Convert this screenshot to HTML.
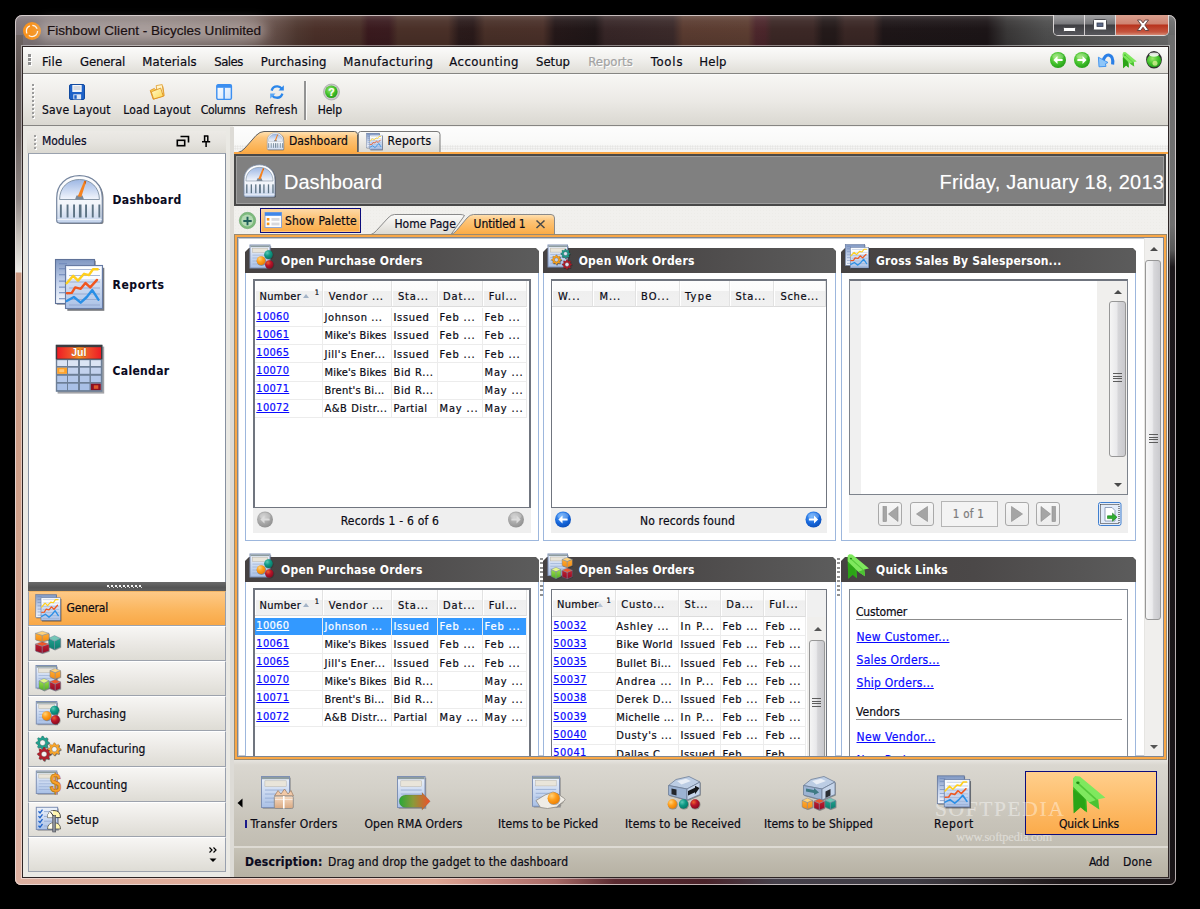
<!DOCTYPE html>
<html><head><meta charset="utf-8"><title>Fishbowl Client - Bicycles Unlimited</title>
<style>
html,body{margin:0;padding:0;background:#000;}
body{width:1200px;height:909px;position:relative;overflow:hidden;font-family:"DejaVu Sans Condensed","Liberation Sans",sans-serif;font-size:13px;color:#000;}
div,span,svg,a{position:absolute;box-sizing:border-box;white-space:pre;}
span{-webkit-text-stroke:.2px currentColor;}
a{color:#0000e0;text-decoration:underline;}
.lk{color:#0000e6;text-decoration:underline;}
</style></head><body>
<div style="left:15px;top:15px;width:1161px;height:870px;border-radius:7px 7px 6px 6px;overflow:hidden;background:#3a2e2e;"><div style="left:0;top:0;width:1161px;height:33px;background:linear-gradient(to right,#80767a 0,#83797a 40px,#867b79 130px,#7c6c68 225px,#6a544e 255px,#503931 282px,#4b3029 300px,#492f28 345px,#3a1a1e 353px,#3a1b1f 374px,#4a3028 383px,#4a3028 433px,#2b1b1b 444px,#2a1a1a 458px,#493028 470px,#4a3029 528px,#251819 540px,#1f1617 580px,#372627 590px,#3b2a2a 658px,#5b3c31 668px,#5d3e32 733px,#4d272c 741px,#4b262b 750px,#3c2826 757px,#3c2826 798px,#241a1a 808px,#241a1a 820px,#3a2725 830px,#3a2725 858px,#1e1618 868px,#1c1517 972px,#3a3838 992px,#4e4e4e 1030px,#5a5a5a 1075px,#6e6e6e 1161px);"></div><div style="left:0;top:0;width:1161px;height:33px;background:linear-gradient(to bottom,rgba(255,255,255,.18) 0,rgba(255,255,255,.05) 6px,rgba(0,0,0,0) 14px,rgba(0,0,0,.12) 33px);"></div><div style="left:0;top:20px;width:8px;height:850px;background:linear-gradient(to bottom,#6e6462 0,#5c5250 40px,#685e5c 100px,#8e8684 165px,#c4beb8 200px,#ecebe6 237px,#c8957e 238px,#d0a08a 500px,#ddb0a0 850px);"></div><div style="left:1153px;top:20px;width:8px;height:850px;background:linear-gradient(to bottom,#6e6e6e 0,#707070 190px,#585858 215px,#1c181b 232px,#181416 850px);"></div><div style="left:0;top:862px;width:1161px;height:8px;background:linear-gradient(to right,#dcb0a0 0,#e0ab98 200px,#dda592 420px,#c98a80 470px,#a86a66 540px,#5a2a30 600px,#4a2229 690px,#45404a 760px,#3f3c44 900px,#2a2426 1000px,#1c1618 1050px,#1a1416 1161px);"></div></div>
<div style="left:15px;top:15px;width:1161px;height:870px;border-radius:7px 7px 6px 6px;border:1px solid rgba(235,225,225,.75);"></div>
<div style="left:22px;top:46px;width:1147px;height:832px;border:1px solid #2d2424;background:#f0efec;"></div>
<div style="left:21px;top:45px;width:1149px;height:834px;border:1px solid rgba(255,255,255,.45);"></div>
<svg style="left:22px;top:21px;" width="20" height="20" viewBox="0 0 20 20"><circle cx="10" cy="10" r="9" fill="#f7931e"/><circle cx="10" cy="10" r="5.6" fill="none" stroke="#fff" stroke-width="1.3" stroke-dasharray="12 2.5 9 2.5 6 2.5" opacity=".9"/></svg>
<div style="left:38px;top:21px;width:228px;height:20px;border-radius:11px;background:rgba(222,212,210,.42);filter:blur(6px);"></div>
<span style="left:47px;top:23.6px;font-size:13.5px;line-height:13.5px;color:#1a1012;letter-spacing:0.03px;font-family:'Liberation Sans',sans-serif;">Fishbowl Client - Bicycles Unlimited</span>
<div style="left:1053px;top:15px;width:116px;height:21px;border-radius:0 0 5px 5px;border:1px solid rgba(240,235,235,.85);border-top:none;overflow:hidden;"><div style="left:0;top:0;width:31px;height:20px;background:linear-gradient(to bottom,#a2a2a4 0,#78787b 45%,#3e3e42 50%,#57575c 100%);border-right:1px solid rgba(240,235,235,.8);"></div><div style="left:31px;top:0;width:31px;height:20px;background:linear-gradient(to bottom,#a2a2a4 0,#78787b 45%,#3e3e42 50%,#57575c 100%);border-right:1px solid rgba(240,235,235,.8);"></div><div style="left:62px;top:0;width:53px;height:20px;background:linear-gradient(to bottom,#d9a08f 0,#cf8270 45%,#b8321c 50%,#c5553f 85%,#d78a74 100%);"></div></div>
<svg style="left:1063px;top:27px;" width="13" height="5" viewBox="0 0 13 5"><rect x=".5" y=".5" width="12" height="4" rx="1" fill="#fff" stroke="#4a4a4e"/></svg>
<svg style="left:1093px;top:19px;" width="15" height="12" viewBox="0 0 15 12"><rect x=".5" y=".5" width="13" height="10.5" rx="1" fill="#fff" stroke="#4a4a4e"/><rect x="4" y="4" width="6" height="3.5" fill="#5a6a8a" stroke="#3a3f4f" stroke-width=".8"/></svg>
<svg style="left:1136px;top:19px;" width="14" height="13" viewBox="0 0 14 13"><path d="M1.5 1h3.3l2.2 2.9L9.2 1h3.3L8.8 6l3.9 5.5H9.3L7 8.3 4.7 11.5H1.3L5.2 6z" fill="#fff" stroke="#5a3a38" stroke-width=".9"/></svg>
<div style="left:23px;top:47px;width:1145px;height:27px;background:linear-gradient(to bottom,#fbfbfa 0,#f1f0ed 45%,#e0ded8 100%);border-bottom:1px solid #868582;"></div>
<div style="left:28px;top:54px;width:3px;height:3px;background:#8f8f8f;box-shadow:1px 1px 0 #fff;"></div>
<div style="left:28px;top:58px;width:3px;height:3px;background:#8f8f8f;box-shadow:1px 1px 0 #fff;"></div>
<div style="left:28px;top:62px;width:3px;height:3px;background:#8f8f8f;box-shadow:1px 1px 0 #fff;"></div>
<span style="left:42px;top:54.5px;font-size:13px;line-height:13px;color:#0a0a14;letter-spacing:0.20px;">File</span>
<span style="left:80px;top:54.5px;font-size:13px;line-height:13px;color:#0a0a14;letter-spacing:-0.16px;">General</span>
<span style="left:142.3px;top:54.5px;font-size:13px;line-height:13px;color:#0a0a14;letter-spacing:0.09px;">Materials</span>
<span style="left:214.3px;top:54.5px;font-size:13px;line-height:13px;color:#0a0a14;letter-spacing:-0.55px;">Sales</span>
<span style="left:260.7px;top:54.5px;font-size:13px;line-height:13px;color:#0a0a14;letter-spacing:0.20px;">Purchasing</span>
<span style="left:343.3px;top:54.5px;font-size:13px;line-height:13px;color:#0a0a14;letter-spacing:0.41px;">Manufacturing</span>
<span style="left:449.3px;top:54.5px;font-size:13px;line-height:13px;color:#0a0a14;letter-spacing:0.44px;">Accounting</span>
<span style="left:536px;top:54.5px;font-size:13px;line-height:13px;color:#0a0a14;letter-spacing:-0.01px;">Setup</span>
<span style="left:588.3px;top:54.5px;font-size:13px;line-height:13px;color:#a3a3a3;letter-spacing:-0.06px;text-shadow:1px 1px 0 #fff;">Reports</span>
<span style="left:650.7px;top:54.5px;font-size:13px;line-height:13px;color:#0a0a14;letter-spacing:0.80px;">Tools</span>
<span style="left:699.3px;top:54.5px;font-size:13px;line-height:13px;color:#0a0a14;letter-spacing:0.18px;">Help</span>
<div style="left:23px;top:74px;width:1145px;height:52px;background:linear-gradient(to bottom,#f7f6f4 0,#eceae6 50%,#dad8d1 100%);border-bottom:1px solid #868582;border-top:1px solid #fbfbfa;"></div>
<div style="left:23px;top:126px;width:1145px;height:1px;background:#f4f3f0;"></div>
<div style="left:32px;top:84px;width:2px;height:2px;background:#9a9a9a;box-shadow:1px 1px 0 #fff;"></div>
<div style="left:32px;top:88px;width:2px;height:2px;background:#9a9a9a;box-shadow:1px 1px 0 #fff;"></div>
<div style="left:32px;top:92px;width:2px;height:2px;background:#9a9a9a;box-shadow:1px 1px 0 #fff;"></div>
<div style="left:32px;top:96px;width:2px;height:2px;background:#9a9a9a;box-shadow:1px 1px 0 #fff;"></div>
<div style="left:32px;top:100px;width:2px;height:2px;background:#9a9a9a;box-shadow:1px 1px 0 #fff;"></div>
<div style="left:32px;top:104px;width:2px;height:2px;background:#9a9a9a;box-shadow:1px 1px 0 #fff;"></div>
<div style="left:32px;top:108px;width:2px;height:2px;background:#9a9a9a;box-shadow:1px 1px 0 #fff;"></div>
<div style="left:32px;top:112px;width:2px;height:2px;background:#9a9a9a;box-shadow:1px 1px 0 #fff;"></div>
<div style="left:32px;top:116px;width:2px;height:2px;background:#9a9a9a;box-shadow:1px 1px 0 #fff;"></div>
<span style="left:42px;top:103.6px;font-size:12px;line-height:12px;color:#0a0a14;letter-spacing:0.19px;">Save Layout</span>
<span style="left:123.3px;top:103.6px;font-size:12px;line-height:12px;color:#0a0a14;letter-spacing:0.13px;">Load Layout</span>
<span style="left:200.7px;top:103.6px;font-size:12px;line-height:12px;color:#0a0a14;letter-spacing:-0.34px;">Columns</span>
<span style="left:255px;top:103.6px;font-size:12px;line-height:12px;color:#0a0a14;letter-spacing:0.33px;">Refresh</span>
<span style="left:317.7px;top:103.6px;font-size:12px;line-height:12px;color:#0a0a14;letter-spacing:-0.08px;">Help</span>
<div style="left:303.5px;top:81px;width:2px;height:39px;background:#939393;box-shadow:1px 0 0 #fbfbfa;"></div>
<div style="left:23px;top:126px;width:210px;height:751px;background:#eae9e4;"></div>
<div style="left:27px;top:131px;width:199px;height:22px;background:linear-gradient(to bottom,#eceae6 0,#e6e4df 50%,#dbd9d2 100%);"></div>
<div style="left:34px;top:135px;width:2px;height:2px;background:#a0a0a0;box-shadow:1px 1px 0 #fff;"></div>
<div style="left:34px;top:139px;width:2px;height:2px;background:#a0a0a0;box-shadow:1px 1px 0 #fff;"></div>
<div style="left:34px;top:143px;width:2px;height:2px;background:#a0a0a0;box-shadow:1px 1px 0 #fff;"></div>
<div style="left:34px;top:147px;width:2px;height:2px;background:#a0a0a0;box-shadow:1px 1px 0 #fff;"></div>
<span style="left:42px;top:135.1px;font-size:12px;line-height:12px;color:#0a0a28;letter-spacing:-0.06px;">Modules</span>
<svg style="left:176px;top:135px;" width="14" height="12" viewBox="0 0 14 12"><path d="M4.5 1.5h8v6" fill="none" stroke="#000" stroke-width="1.6"/><rect x="1.3" y="5.3" width="7.4" height="5.4" fill="none" stroke="#000" stroke-width="1.6"/></svg>
<svg style="left:201px;top:135px;" width="10" height="13" viewBox="0 0 10 13"><path d="M2.8 1h4.6M3.6 1v5.6M6.8 1v5.6M1 6.8h8.2M5.1 7v5" fill="none" stroke="#000" stroke-width="1.5"/></svg>
<div style="left:28px;top:153px;width:198px;height:430px;background:#fff;border:1px solid #8690a0;border-top-color:#9aa2ae;"></div>
<span style="left:112.5px;top:193.5px;font-size:12px;line-height:12px;font-weight:700;color:#0a0a1e;letter-spacing:0.35px;-webkit-text-stroke:.1px;">Dashboard</span>
<span style="left:112.5px;top:279.1px;font-size:12px;line-height:12px;font-weight:700;color:#0a0a1e;letter-spacing:0.61px;-webkit-text-stroke:.1px;">Reports</span>
<span style="left:112.5px;top:364.7px;font-size:12px;line-height:12px;font-weight:700;color:#0a0a1e;letter-spacing:0.34px;-webkit-text-stroke:.1px;">Calendar</span>
<div style="left:28px;top:582px;width:198px;height:9px;background:linear-gradient(to bottom,#6a6a6a 0,#555 60%,#5e5e5e 100%);"></div>
<div style="left:107px;top:585px;width:2px;height:2px;background:#f2f2f2;"></div>
<div style="left:109px;top:587px;width:1px;height:1px;background:#dcdcdc;"></div>
<div style="left:111px;top:585px;width:2px;height:2px;background:#f2f2f2;"></div>
<div style="left:113px;top:587px;width:1px;height:1px;background:#dcdcdc;"></div>
<div style="left:115px;top:585px;width:2px;height:2px;background:#f2f2f2;"></div>
<div style="left:117px;top:587px;width:1px;height:1px;background:#dcdcdc;"></div>
<div style="left:119px;top:585px;width:2px;height:2px;background:#f2f2f2;"></div>
<div style="left:121px;top:587px;width:1px;height:1px;background:#dcdcdc;"></div>
<div style="left:123px;top:585px;width:2px;height:2px;background:#f2f2f2;"></div>
<div style="left:125px;top:587px;width:1px;height:1px;background:#dcdcdc;"></div>
<div style="left:127px;top:585px;width:2px;height:2px;background:#f2f2f2;"></div>
<div style="left:129px;top:587px;width:1px;height:1px;background:#dcdcdc;"></div>
<div style="left:131px;top:585px;width:2px;height:2px;background:#f2f2f2;"></div>
<div style="left:133px;top:587px;width:1px;height:1px;background:#dcdcdc;"></div>
<div style="left:135px;top:585px;width:2px;height:2px;background:#f2f2f2;"></div>
<div style="left:137px;top:587px;width:1px;height:1px;background:#dcdcdc;"></div>
<div style="left:139px;top:585px;width:2px;height:2px;background:#f2f2f2;"></div>
<div style="left:141px;top:587px;width:1px;height:1px;background:#dcdcdc;"></div>
<div style="left:28px;top:591px;width:198px;height:35px;background:linear-gradient(to bottom,#fdc987 0,#fbb65e 55%,#f9a846 100%);border:1px solid #98a0ae;border-top:1px solid #f3b565;border-bottom:1px solid #9da3ad;"></div>
<span style="left:66.5px;top:601.8px;font-size:12px;line-height:12px;color:#0a0a14;letter-spacing:-0.15px;">General</span>
<div style="left:28px;top:626px;width:198px;height:35px;background:linear-gradient(to bottom,#f7f6f4 0,#eceae6 45%,#dedcd5 100%);border:1px solid #98a0ae;border-top:1px solid #fff;border-bottom:1px solid #9da3ad;"></div>
<span style="left:66.5px;top:637.7px;font-size:12px;line-height:12px;color:#0a0a14;letter-spacing:-0.11px;">Materials</span>
<div style="left:28px;top:661px;width:198px;height:35px;background:linear-gradient(to bottom,#f7f6f4 0,#eceae6 45%,#dedcd5 100%);border:1px solid #98a0ae;border-top:1px solid #fff;border-bottom:1px solid #9da3ad;"></div>
<span style="left:66.5px;top:672.7px;font-size:12px;line-height:12px;color:#0a0a14;letter-spacing:-0.15px;">Sales</span>
<div style="left:28px;top:696px;width:198px;height:35px;background:linear-gradient(to bottom,#f7f6f4 0,#eceae6 45%,#dedcd5 100%);border:1px solid #98a0ae;border-top:1px solid #fff;border-bottom:1px solid #9da3ad;"></div>
<span style="left:66.5px;top:707.7px;font-size:12px;line-height:12px;color:#0a0a14;letter-spacing:0.05px;">Purchasing</span>
<div style="left:28px;top:731px;width:198px;height:36px;background:linear-gradient(to bottom,#f7f6f4 0,#eceae6 45%,#dedcd5 100%);border:1px solid #98a0ae;border-top:1px solid #fff;border-bottom:1px solid #9da3ad;"></div>
<span style="left:66.5px;top:742.7px;font-size:12px;line-height:12px;color:#0a0a14;letter-spacing:0.06px;">Manufacturing</span>
<div style="left:28px;top:767px;width:198px;height:35px;background:linear-gradient(to bottom,#f7f6f4 0,#eceae6 45%,#dedcd5 100%);border:1px solid #98a0ae;border-top:1px solid #fff;border-bottom:1px solid #9da3ad;"></div>
<span style="left:66.5px;top:778.7px;font-size:12px;line-height:12px;color:#0a0a14;letter-spacing:0.07px;">Accounting</span>
<div style="left:28px;top:802px;width:198px;height:35px;background:linear-gradient(to bottom,#f7f6f4 0,#eceae6 45%,#dedcd5 100%);border:1px solid #98a0ae;border-top:1px solid #fff;border-bottom:1px solid #9da3ad;"></div>
<span style="left:66.5px;top:813.7px;font-size:12px;line-height:12px;color:#0a0a14;letter-spacing:0.21px;">Setup</span>
<div style="left:28px;top:837px;width:198px;height:35px;background:linear-gradient(to bottom,#f7f6f4 0,#eceae6 45%,#dedcd5 100%);border:1px solid #98a0ae;border-top:1px solid #fff;border-bottom:1px solid #9da3ad;"></div>
<svg style="left:208px;top:846px;" width="10" height="18" viewBox="0 0 10 18"><path d="M1.5 1.5l2.5 2.5-2.5 2.5M5.5 1.5l2.5 2.5-2.5 2.5" fill="none" stroke="#000" stroke-width="1.2"/><path d="M1.5 12.5h7l-3.5 3.6z" fill="#000"/></svg>
<div style="left:230px;top:127px;width:4px;height:750px;background:#dddbd6;"></div>
<div style="left:234px;top:127px;width:934px;height:25px;background:linear-gradient(to bottom,#fdfdfd 0,#f9f9f8 60%,#f3f3f2 100%);"></div>
<div style="left:234px;top:145px;width:934px;height:5px;background-image:radial-gradient(#d9d8d5 0.8px,transparent 0.9px);background-size:2.5px 2.5px;opacity:.7;"></div>
<svg style="left:234px;top:126px" width="220" height="28" viewBox="0 0 220 28"><defs><linearGradient id="tabo" x1="0" y1="0" x2="0" y2="1"><stop offset="0" stop-color="#ffe2b4"/><stop offset=".3" stop-color="#fdc57a"/><stop offset="1" stop-color="#fbab45"/></linearGradient><linearGradient id="tabg" x1="0" y1="0" x2="0" y2="1"><stop offset="0" stop-color="#fbfbfa"/><stop offset=".5" stop-color="#eceae6"/><stop offset="1" stop-color="#dbd9d2"/></linearGradient></defs><path d="M124.5 26.5V7.5q0-2 2-2H203q3 0 3 3v18z" fill="url(#tabg)" stroke="#7a7a7a"/><path d="M4 26.5q4-1 7-4.500L22 9.500q4-4 8-4H120.500q3 0 3 3V26.500z" fill="url(#tabo)" stroke="#5e5e5e"/></svg>
<span style="left:289px;top:134.8px;font-size:12px;line-height:12px;color:#0a0a14;letter-spacing:0.05px;">Dashboard</span>
<span style="left:387.6px;top:134.8px;font-size:12px;line-height:12px;color:#0a0a14;letter-spacing:0.38px;">Reports</span>
<div style="left:234px;top:152px;width:934px;height:2px;background:#f9a746;"></div>
<div style="left:234px;top:154px;width:932px;height:52px;background:#808080;border:2px solid #484848;border-top-width:2px;box-shadow:inset 0 0 0 1px #9e9e9e;"></div>
<span style="left:284px;top:171.7px;font-size:20px;line-height:20px;color:#fff;letter-spacing:0.02px;font-family:'Liberation Sans',sans-serif;-webkit-text-stroke:0;text-shadow:0 0 1px rgba(255,255,255,.35);">Dashboard</span>
<span style="left:939.5px;top:171.7px;font-size:20px;line-height:20px;color:#fff;letter-spacing:0.20px;font-family:'Liberation Sans',sans-serif;-webkit-text-stroke:0;text-shadow:0 0 1px rgba(255,255,255,.35);">Friday, January 18, 2013</span>
<div style="left:234px;top:206px;width:934px;height:28px;background:#f1f0ed;"></div>
<div style="left:234px;top:206px;width:934px;height:28px;background-image:radial-gradient(#e6e5e0 0.7px,transparent 0.8px);background-size:3px 3px;opacity:.4;"></div>
<div style="left:260px;top:208px;width:101px;height:25px;background:linear-gradient(to bottom,#fdd9a6 0,#fcbf6e 50%,#fbab47 100%);border:1.5px solid #0c0c7c;box-shadow:inset 0 0 0 1px rgba(255,214,160,.6);"></div>
<span style="left:285px;top:215.1px;font-size:12px;line-height:12px;color:#0a0a14;letter-spacing:0.17px;">Show Palette</span>
<svg style="left:366px;top:210px" width="200" height="26" viewBox="0 0 200 26"><path d="M5 24.500q3-1 5.500-4L22 8q3-3.500 6.500-3.500H94q3 0 4.500 1L85 24.500z" fill="url(#tabg)" stroke="#8a8a8a"/><path d="M85 24.500q3-1 5.500-4L101 8q3-3.500 6.500-3.500H185q3.500 0 3.500 3.500V24.500z" fill="url(#tabo)" stroke="#8a8a8a"/></svg>
<span style="left:394.4px;top:218.4px;font-size:12px;line-height:12px;color:#0a0a1e;letter-spacing:0.01px;">Home Page</span>
<span style="left:473.6px;top:218.4px;font-size:12px;line-height:12px;color:#0a0a14;letter-spacing:-0.10px;">Untitled 1</span>
<svg style="left:535px;top:219px;" width="11" height="10" viewBox="0 0 11 10"><path d="M1.5 1.500l8 7.500M9.500 1.500l-8 7.500" stroke="#4a4a4a" stroke-width="1.5" fill="none"/></svg>
<div style="left:234px;top:234px;width:933px;height:526px;background:#fff;border:1px solid #9a8a70;"></div>
<div style="left:235px;top:235px;width:931px;height:524px;border:2px solid #f9a746;"></div>
<div style="left:237px;top:237px;width:927px;height:520px;border:1px solid #7f8692;box-shadow:inset 0 0 0 1px #c5c9d0;"></div>
<div style="left:238px;top:238px;width:925px;height:518px;overflow:hidden;">
<div style="left:7px;top:34px;width:294px;height:269px;border:1px solid #9db7dd;border-top:none;background:#fff;"></div>
<div style="left:7px;top:10px;width:294px;height:25px;background:linear-gradient(to right,#464242 0,#4b4848 45%,#5c5c5c 100%);clip-path:polygon(0 4px,4px 0,calc(100% - 3px) 0,100% 3px,100% 100%,0 100%);"></div>
<div style="left:161px;top:10px;width:70px;height:25px;background-image:radial-gradient(rgba(255,255,255,.10) 0.6px,transparent 0.7px);background-size:2px 2px;"></div>
<span style="left:43px;top:17.1px;font-size:12px;line-height:12px;font-weight:700;color:#fff;letter-spacing:0.24px;-webkit-text-stroke:0;">Open Purchase Orders</span>
<div style="left:15px;top:41px;width:278px;height:229px;border:1px solid #70757f;border-left-width:2px;border-top-width:2px;border-right-width:2px;background:#fff;"></div>
<div style="left:17px;top:43px;width:68px;height:26px;background:linear-gradient(to bottom,#fdfdfd 0,#fbfbfb 38%,#efefef 42%,#f1f1f1 100%);border-right:1px solid #e2e2e2;border-bottom:1px solid #dcdcdc;box-shadow:inset 1px 0 0 #fff;"></div>
<div style="left:85px;top:43px;width:69px;height:26px;background:linear-gradient(to bottom,#fdfdfd 0,#fbfbfb 38%,#efefef 42%,#f1f1f1 100%);border-right:1px solid #e2e2e2;border-bottom:1px solid #dcdcdc;box-shadow:inset 1px 0 0 #fff;"></div>
<div style="left:154px;top:43px;width:46px;height:26px;background:linear-gradient(to bottom,#fdfdfd 0,#fbfbfb 38%,#efefef 42%,#f1f1f1 100%);border-right:1px solid #e2e2e2;border-bottom:1px solid #dcdcdc;box-shadow:inset 1px 0 0 #fff;"></div>
<div style="left:200px;top:43px;width:45px;height:26px;background:linear-gradient(to bottom,#fdfdfd 0,#fbfbfb 38%,#efefef 42%,#f1f1f1 100%);border-right:1px solid #e2e2e2;border-bottom:1px solid #dcdcdc;box-shadow:inset 1px 0 0 #fff;"></div>
<div style="left:245px;top:43px;width:44px;height:26px;background:linear-gradient(to bottom,#fdfdfd 0,#fbfbfb 38%,#efefef 42%,#f1f1f1 100%);border-right:1px solid #e2e2e2;border-bottom:1px solid #dcdcdc;box-shadow:inset 1px 0 0 #fff;"></div>
<span style="left:21.5px;top:52.7px;font-size:11px;line-height:11px;color:#0a0a14;letter-spacing:0.29px;">Number</span>
<span style="left:90.69999999999999px;top:52.7px;font-size:11px;line-height:11px;color:#0a0a14;letter-spacing:0.78px;">Vendor ...</span>
<span style="left:160px;top:52.7px;font-size:11px;line-height:11px;color:#0a0a14;letter-spacing:0.84px;">Sta...</span>
<span style="left:205px;top:52.7px;font-size:11px;line-height:11px;color:#0a0a14;letter-spacing:0.92px;">Dat...</span>
<span style="left:250.7px;top:52.7px;font-size:11px;line-height:11px;color:#0a0a14;letter-spacing:0.88px;">Ful...</span>
<div style="left:64.5px;top:55.5px;width:0px;height:0px;border-left:3.2px solid transparent;border-right:3.2px solid transparent;border-bottom:4.2px solid #a3b3c6;"></div>
<span style="left:76.80000000000001px;top:50.6px;font-size:7.5px;line-height:7.5px;color:#0a0a14;">1</span>
<div style="left:17px;top:88.0px;width:272px;height:1px;background:#ececec;"></div>
<span style="left:18.30000000000001px;top:72.6px;font-size:11px;line-height:11px;color:#0a0aff;letter-spacing:0.30px;text-decoration:underline;">10060</span>
<span style="left:86.5px;top:74.2px;font-size:11px;line-height:11px;color:#0a0a14;letter-spacing:0.58px;">Johnson ...</span>
<span style="left:155.5px;top:74.2px;font-size:11px;line-height:11px;color:#0a0a14;letter-spacing:0.68px;">Issued</span>
<span style="left:201.5px;top:74.2px;font-size:11px;line-height:11px;color:#0a0a14;letter-spacing:0.85px;">Feb ...</span>
<span style="left:246.5px;top:74.2px;font-size:11px;line-height:11px;color:#0a0a14;letter-spacing:0.85px;">Feb ...</span>
<div style="left:17px;top:106.19999999999999px;width:272px;height:1px;background:#ececec;"></div>
<span style="left:18.30000000000001px;top:90.8px;font-size:11px;line-height:11px;color:#0a0aff;letter-spacing:0.30px;text-decoration:underline;">10061</span>
<span style="left:86.5px;top:92.4px;font-size:11px;line-height:11px;color:#0a0a14;letter-spacing:0.18px;">Mike&#x27;s Bikes</span>
<span style="left:155.5px;top:92.4px;font-size:11px;line-height:11px;color:#0a0a14;letter-spacing:0.68px;">Issued</span>
<span style="left:201.5px;top:92.4px;font-size:11px;line-height:11px;color:#0a0a14;letter-spacing:0.85px;">Feb ...</span>
<span style="left:246.5px;top:92.4px;font-size:11px;line-height:11px;color:#0a0a14;letter-spacing:0.85px;">Feb ...</span>
<div style="left:17px;top:124.39999999999998px;width:272px;height:1px;background:#ececec;"></div>
<span style="left:18.30000000000001px;top:109.0px;font-size:11px;line-height:11px;color:#0a0aff;letter-spacing:0.30px;text-decoration:underline;">10065</span>
<span style="left:86.5px;top:110.6px;font-size:11px;line-height:11px;color:#0a0a14;letter-spacing:0.55px;">Jill&#x27;s Ener...</span>
<span style="left:155.5px;top:110.6px;font-size:11px;line-height:11px;color:#0a0a14;letter-spacing:0.68px;">Issued</span>
<span style="left:201.5px;top:110.6px;font-size:11px;line-height:11px;color:#0a0a14;letter-spacing:0.85px;">Feb ...</span>
<span style="left:246.5px;top:110.6px;font-size:11px;line-height:11px;color:#0a0a14;letter-spacing:0.85px;">Feb ...</span>
<div style="left:17px;top:142.60000000000002px;width:272px;height:1px;background:#ececec;"></div>
<span style="left:18.30000000000001px;top:127.2px;font-size:11px;line-height:11px;color:#0a0aff;letter-spacing:0.30px;text-decoration:underline;">10070</span>
<span style="left:86.5px;top:128.8px;font-size:11px;line-height:11px;color:#0a0a14;letter-spacing:0.18px;">Mike&#x27;s Bikes</span>
<span style="left:155.5px;top:128.8px;font-size:11px;line-height:11px;color:#0a0a14;letter-spacing:0.64px;">Bid R...</span>
<span style="left:246.5px;top:128.8px;font-size:11px;line-height:11px;color:#0a0a14;letter-spacing:0.85px;">May ...</span>
<div style="left:17px;top:160.8px;width:272px;height:1px;background:#ececec;"></div>
<span style="left:18.30000000000001px;top:145.4px;font-size:11px;line-height:11px;color:#0a0aff;letter-spacing:0.30px;text-decoration:underline;">10071</span>
<span style="left:86.5px;top:147.0px;font-size:11px;line-height:11px;color:#0a0a14;letter-spacing:0.24px;">Brent&#x27;s Bi...</span>
<span style="left:155.5px;top:147.0px;font-size:11px;line-height:11px;color:#0a0a14;letter-spacing:0.64px;">Bid R...</span>
<span style="left:246.5px;top:147.0px;font-size:11px;line-height:11px;color:#0a0a14;letter-spacing:0.85px;">May ...</span>
<div style="left:17px;top:179.0px;width:272px;height:1px;background:#ececec;"></div>
<span style="left:18.30000000000001px;top:163.6px;font-size:11px;line-height:11px;color:#0a0aff;letter-spacing:0.30px;text-decoration:underline;">10072</span>
<span style="left:86.5px;top:165.2px;font-size:11px;line-height:11px;color:#0a0a14;letter-spacing:0.56px;">A&amp;B Distr...</span>
<span style="left:155.5px;top:165.2px;font-size:11px;line-height:11px;color:#0a0a14;letter-spacing:0.42px;">Partial</span>
<span style="left:201.5px;top:165.2px;font-size:11px;line-height:11px;color:#0a0a14;letter-spacing:0.85px;">May ...</span>
<span style="left:246.5px;top:165.2px;font-size:11px;line-height:11px;color:#0a0a14;letter-spacing:0.85px;">May ...</span>
<div style="left:84px;top:70px;width:1px;height:109.5px;background:#ececec;"></div>
<div style="left:153px;top:70px;width:1px;height:109.5px;background:#ececec;"></div>
<div style="left:199px;top:70px;width:1px;height:109.5px;background:#ececec;"></div>
<div style="left:244px;top:70px;width:1px;height:109.5px;background:#ececec;"></div>
<div style="left:288px;top:70px;width:1px;height:109.5px;background:#ececec;"></div>
<div style="left:15px;top:270px;width:278px;height:25px;background:#efefef;"></div>
<span style="left:102.69999999999999px;top:276.9px;font-size:12px;line-height:12px;color:#0a0a14;letter-spacing:0.20px;">Records 1 - 6 of 6</span>
<div style="left:7px;top:343px;width:294px;height:269px;border:1px solid #9db7dd;border-top:none;background:#fff;"></div>
<div style="left:7px;top:319px;width:294px;height:25px;background:linear-gradient(to right,#464242 0,#4b4848 45%,#5c5c5c 100%);clip-path:polygon(0 4px,4px 0,calc(100% - 3px) 0,100% 3px,100% 100%,0 100%);"></div>
<div style="left:161px;top:319px;width:70px;height:25px;background-image:radial-gradient(rgba(255,255,255,.10) 0.6px,transparent 0.7px);background-size:2px 2px;"></div>
<span style="left:43px;top:326.1px;font-size:12px;line-height:12px;font-weight:700;color:#fff;letter-spacing:0.24px;-webkit-text-stroke:0;">Open Purchase Orders</span>
<div style="left:15px;top:350px;width:278px;height:229px;border:1px solid #70757f;border-left-width:2px;border-top-width:2px;border-right-width:2px;background:#fff;"></div>
<div style="left:17px;top:352px;width:68px;height:26px;background:linear-gradient(to bottom,#fdfdfd 0,#fbfbfb 38%,#efefef 42%,#f1f1f1 100%);border-right:1px solid #e2e2e2;border-bottom:1px solid #dcdcdc;box-shadow:inset 1px 0 0 #fff;"></div>
<div style="left:85px;top:352px;width:69px;height:26px;background:linear-gradient(to bottom,#fdfdfd 0,#fbfbfb 38%,#efefef 42%,#f1f1f1 100%);border-right:1px solid #e2e2e2;border-bottom:1px solid #dcdcdc;box-shadow:inset 1px 0 0 #fff;"></div>
<div style="left:154px;top:352px;width:46px;height:26px;background:linear-gradient(to bottom,#fdfdfd 0,#fbfbfb 38%,#efefef 42%,#f1f1f1 100%);border-right:1px solid #e2e2e2;border-bottom:1px solid #dcdcdc;box-shadow:inset 1px 0 0 #fff;"></div>
<div style="left:200px;top:352px;width:45px;height:26px;background:linear-gradient(to bottom,#fdfdfd 0,#fbfbfb 38%,#efefef 42%,#f1f1f1 100%);border-right:1px solid #e2e2e2;border-bottom:1px solid #dcdcdc;box-shadow:inset 1px 0 0 #fff;"></div>
<div style="left:245px;top:352px;width:44px;height:26px;background:linear-gradient(to bottom,#fdfdfd 0,#fbfbfb 38%,#efefef 42%,#f1f1f1 100%);border-right:1px solid #e2e2e2;border-bottom:1px solid #dcdcdc;box-shadow:inset 1px 0 0 #fff;"></div>
<span style="left:21.5px;top:361.7px;font-size:11px;line-height:11px;color:#0a0a14;letter-spacing:0.29px;">Number</span>
<span style="left:90.69999999999999px;top:361.7px;font-size:11px;line-height:11px;color:#0a0a14;letter-spacing:0.78px;">Vendor ...</span>
<span style="left:160px;top:361.7px;font-size:11px;line-height:11px;color:#0a0a14;letter-spacing:0.84px;">Sta...</span>
<span style="left:205px;top:361.7px;font-size:11px;line-height:11px;color:#0a0a14;letter-spacing:0.92px;">Dat...</span>
<span style="left:250.7px;top:361.7px;font-size:11px;line-height:11px;color:#0a0a14;letter-spacing:0.88px;">Ful...</span>
<div style="left:64.5px;top:364.5px;width:0px;height:0px;border-left:3.2px solid transparent;border-right:3.2px solid transparent;border-bottom:4.2px solid #a3b3c6;"></div>
<span style="left:76.80000000000001px;top:359.6px;font-size:7.5px;line-height:7.5px;color:#0a0a14;">1</span>
<div style="left:17px;top:380.0px;width:67px;height:16.5px;background:#3399ff;"></div>
<div style="left:85px;top:380.0px;width:68px;height:16.5px;background:#3399ff;"></div>
<div style="left:154px;top:380.0px;width:45px;height:16.5px;background:#3399ff;"></div>
<div style="left:200px;top:380.0px;width:44px;height:16.5px;background:#3399ff;"></div>
<div style="left:245px;top:380.0px;width:43px;height:16.5px;background:#3399ff;"></div>
<span style="left:18.30000000000001px;top:381.6px;font-size:11px;line-height:11px;color:#fff;letter-spacing:0.30px;text-decoration:underline;">10060</span>
<span style="left:86.5px;top:383.2px;font-size:11px;line-height:11px;color:#fff;letter-spacing:0.58px;">Johnson ...</span>
<span style="left:155.5px;top:383.2px;font-size:11px;line-height:11px;color:#fff;letter-spacing:0.68px;">Issued</span>
<span style="left:201.5px;top:383.2px;font-size:11px;line-height:11px;color:#fff;letter-spacing:0.85px;">Feb ...</span>
<span style="left:246.5px;top:383.2px;font-size:11px;line-height:11px;color:#fff;letter-spacing:0.85px;">Feb ...</span>
<div style="left:17px;top:415.20000000000005px;width:272px;height:1px;background:#ececec;"></div>
<span style="left:18.30000000000001px;top:399.8px;font-size:11px;line-height:11px;color:#0a0aff;letter-spacing:0.30px;text-decoration:underline;">10061</span>
<span style="left:86.5px;top:401.4px;font-size:11px;line-height:11px;color:#0a0a14;letter-spacing:0.18px;">Mike&#x27;s Bikes</span>
<span style="left:155.5px;top:401.4px;font-size:11px;line-height:11px;color:#0a0a14;letter-spacing:0.68px;">Issued</span>
<span style="left:201.5px;top:401.4px;font-size:11px;line-height:11px;color:#0a0a14;letter-spacing:0.85px;">Feb ...</span>
<span style="left:246.5px;top:401.4px;font-size:11px;line-height:11px;color:#0a0a14;letter-spacing:0.85px;">Feb ...</span>
<div style="left:17px;top:433.4px;width:272px;height:1px;background:#ececec;"></div>
<span style="left:18.30000000000001px;top:418.0px;font-size:11px;line-height:11px;color:#0a0aff;letter-spacing:0.30px;text-decoration:underline;">10065</span>
<span style="left:86.5px;top:419.6px;font-size:11px;line-height:11px;color:#0a0a14;letter-spacing:0.55px;">Jill&#x27;s Ener...</span>
<span style="left:155.5px;top:419.6px;font-size:11px;line-height:11px;color:#0a0a14;letter-spacing:0.68px;">Issued</span>
<span style="left:201.5px;top:419.6px;font-size:11px;line-height:11px;color:#0a0a14;letter-spacing:0.85px;">Feb ...</span>
<span style="left:246.5px;top:419.6px;font-size:11px;line-height:11px;color:#0a0a14;letter-spacing:0.85px;">Feb ...</span>
<div style="left:17px;top:451.6px;width:272px;height:1px;background:#ececec;"></div>
<span style="left:18.30000000000001px;top:436.2px;font-size:11px;line-height:11px;color:#0a0aff;letter-spacing:0.30px;text-decoration:underline;">10070</span>
<span style="left:86.5px;top:437.8px;font-size:11px;line-height:11px;color:#0a0a14;letter-spacing:0.18px;">Mike&#x27;s Bikes</span>
<span style="left:155.5px;top:437.8px;font-size:11px;line-height:11px;color:#0a0a14;letter-spacing:0.64px;">Bid R...</span>
<span style="left:246.5px;top:437.8px;font-size:11px;line-height:11px;color:#0a0a14;letter-spacing:0.85px;">May ...</span>
<div style="left:17px;top:469.79999999999995px;width:272px;height:1px;background:#ececec;"></div>
<span style="left:18.30000000000001px;top:454.4px;font-size:11px;line-height:11px;color:#0a0aff;letter-spacing:0.30px;text-decoration:underline;">10071</span>
<span style="left:86.5px;top:456.0px;font-size:11px;line-height:11px;color:#0a0a14;letter-spacing:0.24px;">Brent&#x27;s Bi...</span>
<span style="left:155.5px;top:456.0px;font-size:11px;line-height:11px;color:#0a0a14;letter-spacing:0.64px;">Bid R...</span>
<span style="left:246.5px;top:456.0px;font-size:11px;line-height:11px;color:#0a0a14;letter-spacing:0.85px;">May ...</span>
<div style="left:17px;top:488.0px;width:272px;height:1px;background:#ececec;"></div>
<span style="left:18.30000000000001px;top:472.6px;font-size:11px;line-height:11px;color:#0a0aff;letter-spacing:0.30px;text-decoration:underline;">10072</span>
<span style="left:86.5px;top:474.2px;font-size:11px;line-height:11px;color:#0a0a14;letter-spacing:0.56px;">A&amp;B Distr...</span>
<span style="left:155.5px;top:474.2px;font-size:11px;line-height:11px;color:#0a0a14;letter-spacing:0.42px;">Partial</span>
<span style="left:201.5px;top:474.2px;font-size:11px;line-height:11px;color:#0a0a14;letter-spacing:0.85px;">May ...</span>
<span style="left:246.5px;top:474.2px;font-size:11px;line-height:11px;color:#0a0a14;letter-spacing:0.85px;">May ...</span>
<div style="left:84px;top:379px;width:1px;height:109.5px;background:#ececec;"></div>
<div style="left:153px;top:379px;width:1px;height:109.5px;background:#ececec;"></div>
<div style="left:199px;top:379px;width:1px;height:109.5px;background:#ececec;"></div>
<div style="left:244px;top:379px;width:1px;height:109.5px;background:#ececec;"></div>
<div style="left:288px;top:379px;width:1px;height:109.5px;background:#ececec;"></div>
<div style="left:305px;top:34px;width:293px;height:269px;border:1px solid #9db7dd;border-top:none;background:#fff;"></div>
<div style="left:305px;top:10px;width:293px;height:25px;background:linear-gradient(to right,#464242 0,#4b4848 45%,#5c5c5c 100%);clip-path:polygon(0 4px,4px 0,calc(100% - 3px) 0,100% 3px,100% 100%,0 100%);"></div>
<div style="left:458px;top:10px;width:70px;height:25px;background-image:radial-gradient(rgba(255,255,255,.10) 0.6px,transparent 0.7px);background-size:2px 2px;"></div>
<span style="left:340.70000000000005px;top:17.1px;font-size:12px;line-height:12px;font-weight:700;color:#fff;letter-spacing:0.24px;-webkit-text-stroke:0;">Open Work Orders</span>
<div style="left:313px;top:41px;width:276px;height:229px;border:1px solid #70757f;border-left-width:1px;border-top-width:2px;border-right-width:1px;background:#fff;"></div>
<div style="left:314px;top:43px;width:41px;height:26px;background:linear-gradient(to bottom,#fdfdfd 0,#fbfbfb 38%,#efefef 42%,#f1f1f1 100%);border-right:1px solid #e2e2e2;border-bottom:1px solid #dcdcdc;box-shadow:inset 1px 0 0 #fff;"></div>
<div style="left:355px;top:43px;width:43px;height:26px;background:linear-gradient(to bottom,#fdfdfd 0,#fbfbfb 38%,#efefef 42%,#f1f1f1 100%);border-right:1px solid #e2e2e2;border-bottom:1px solid #dcdcdc;box-shadow:inset 1px 0 0 #fff;"></div>
<div style="left:398px;top:43px;width:44px;height:26px;background:linear-gradient(to bottom,#fdfdfd 0,#fbfbfb 38%,#efefef 42%,#f1f1f1 100%);border-right:1px solid #e2e2e2;border-bottom:1px solid #dcdcdc;box-shadow:inset 1px 0 0 #fff;"></div>
<div style="left:442px;top:43px;width:50px;height:26px;background:linear-gradient(to bottom,#fdfdfd 0,#fbfbfb 38%,#efefef 42%,#f1f1f1 100%);border-right:1px solid #e2e2e2;border-bottom:1px solid #dcdcdc;box-shadow:inset 1px 0 0 #fff;"></div>
<div style="left:492px;top:43px;width:44px;height:26px;background:linear-gradient(to bottom,#fdfdfd 0,#fbfbfb 38%,#efefef 42%,#f1f1f1 100%);border-right:1px solid #e2e2e2;border-bottom:1px solid #dcdcdc;box-shadow:inset 1px 0 0 #fff;"></div>
<div style="left:536px;top:43px;width:52px;height:26px;background:linear-gradient(to bottom,#fdfdfd 0,#fbfbfb 38%,#efefef 42%,#f1f1f1 100%);border-right:1px solid #e2e2e2;border-bottom:1px solid #dcdcdc;box-shadow:inset 1px 0 0 #fff;"></div>
<span style="left:320px;top:52.7px;font-size:11px;line-height:11px;color:#0a0a14;letter-spacing:1.26px;">W...</span>
<span style="left:361.5px;top:52.7px;font-size:11px;line-height:11px;color:#0a0a14;letter-spacing:0.88px;">M...</span>
<span style="left:403px;top:52.7px;font-size:11px;line-height:11px;color:#0a0a14;letter-spacing:1.12px;">BO...</span>
<span style="left:447px;top:52.7px;font-size:11px;line-height:11px;color:#0a0a14;letter-spacing:1.23px;">Type</span>
<span style="left:497.5px;top:52.7px;font-size:11px;line-height:11px;color:#0a0a14;letter-spacing:0.81px;">Sta...</span>
<span style="left:542.5px;top:52.7px;font-size:11px;line-height:11px;color:#0a0a14;letter-spacing:0.67px;">Sche...</span>
<div style="left:313px;top:270px;width:276px;height:25px;background:#efefef;"></div>
<span style="left:402px;top:276.9px;font-size:12px;line-height:12px;color:#0a0a14;letter-spacing:0.15px;">No records found</span>
<div style="left:603px;top:34px;width:295px;height:269px;border:1px solid #9db7dd;border-top:none;background:#fff;"></div>
<div style="left:603px;top:10px;width:295px;height:25px;background:linear-gradient(to right,#464242 0,#4b4848 45%,#5c5c5c 100%);clip-path:polygon(0 4px,4px 0,calc(100% - 3px) 0,100% 3px,100% 100%,0 100%);"></div>
<div style="left:758px;top:10px;width:70px;height:25px;background-image:radial-gradient(rgba(255,255,255,.10) 0.6px,transparent 0.7px);background-size:2px 2px;"></div>
<span style="left:638px;top:17.1px;font-size:12px;line-height:12px;font-weight:700;color:#fff;letter-spacing:0.18px;-webkit-text-stroke:0;">Gross Sales By Salesperson...</span>
<div style="left:611px;top:41px;width:279px;height:216px;border:1px solid #7d838c;border-top:2px solid #70757f;background:#fff;"></div>
<div style="left:612px;top:43px;width:11px;height:213px;background:#f0f0f0;"></div>
<div style="left:859px;top:43px;width:30px;height:213px;background:#f0efed;"></div>
<div style="left:871px;top:63px;width:17px;height:156px;border:1px solid #979797;border-radius:3px;background:linear-gradient(to right,#f5f5f5 0,#e9e9eb 45%,#d6d6d9 55%,#c9c9cd 100%);"></div>
<div style="left:875px;top:135.0px;width:9px;height:1px;background:#5c5c5c;"></div>
<div style="left:875px;top:137.60000000000002px;width:9px;height:1px;background:#5c5c5c;"></div>
<div style="left:875px;top:140.2px;width:9px;height:1px;background:#5c5c5c;"></div>
<div style="left:875px;top:142.8px;width:9px;height:1px;background:#5c5c5c;"></div>
<div style="left:876px;top:51.5px;width:0px;height:0px;border-left:4px solid transparent;border-right:4px solid transparent;border-bottom:4px solid #4a4a4a;"></div>
<div style="left:876px;top:244.5px;width:0px;height:0px;border-left:4px solid transparent;border-right:4px solid transparent;border-top:4px solid #4a4a4a;"></div>
<div style="left:611px;top:257px;width:279px;height:38px;background:#efefef;"></div>
<div style="left:640px;top:264px;width:24px;height:24px;border:1px solid #a9a9a9;border-radius:3px;background:linear-gradient(to bottom,#f6f6f6,#ececec);"></div>
<div style="left:672px;top:264px;width:24px;height:24px;border:1px solid #a9a9a9;border-radius:3px;background:linear-gradient(to bottom,#f6f6f6,#ececec);"></div>
<div style="left:767px;top:264px;width:24px;height:24px;border:1px solid #a9a9a9;border-radius:3px;background:linear-gradient(to bottom,#f6f6f6,#ececec);"></div>
<div style="left:798px;top:264px;width:24px;height:24px;border:1px solid #a9a9a9;border-radius:3px;background:linear-gradient(to bottom,#f6f6f6,#ececec);"></div>
<div style="left:703px;top:263px;width:57px;height:26px;border:1px solid #b5b5b5;background:#f3f3f3;"></div>
<span style="left:714.7px;top:270.6px;font-size:11.5px;line-height:11.5px;color:#7c7c7c;letter-spacing:0.30px;">1 of 1</span>
<div style="left:305px;top:343px;width:293px;height:269px;border:1px solid #9db7dd;border-top:none;background:#fff;"></div>
<div style="left:305px;top:319px;width:293px;height:25px;background:linear-gradient(to right,#464242 0,#4b4848 45%,#5c5c5c 100%);clip-path:polygon(0 4px,4px 0,calc(100% - 3px) 0,100% 3px,100% 100%,0 100%);"></div>
<div style="left:458px;top:319px;width:70px;height:25px;background-image:radial-gradient(rgba(255,255,255,.10) 0.6px,transparent 0.7px);background-size:2px 2px;"></div>
<span style="left:340.70000000000005px;top:326.1px;font-size:12px;line-height:12px;font-weight:700;color:#fff;letter-spacing:0.16px;-webkit-text-stroke:0;">Open Sales Orders</span>
<div style="left:313px;top:351px;width:276px;height:228px;border:1px solid #70757f;border-left-width:1px;border-top-width:1px;border-right-width:1px;background:#fff;"></div>
<div style="left:314px;top:352px;width:64px;height:27px;background:linear-gradient(to bottom,#fdfdfd 0,#fbfbfb 38%,#efefef 42%,#f1f1f1 100%);border-right:1px solid #e2e2e2;border-bottom:1px solid #dcdcdc;box-shadow:inset 1px 0 0 #fff;"></div>
<div style="left:378px;top:352px;width:63px;height:27px;background:linear-gradient(to bottom,#fdfdfd 0,#fbfbfb 38%,#efefef 42%,#f1f1f1 100%);border-right:1px solid #e2e2e2;border-bottom:1px solid #dcdcdc;box-shadow:inset 1px 0 0 #fff;"></div>
<div style="left:441px;top:352px;width:42px;height:27px;background:linear-gradient(to bottom,#fdfdfd 0,#fbfbfb 38%,#efefef 42%,#f1f1f1 100%);border-right:1px solid #e2e2e2;border-bottom:1px solid #dcdcdc;box-shadow:inset 1px 0 0 #fff;"></div>
<div style="left:483px;top:352px;width:43px;height:27px;background:linear-gradient(to bottom,#fdfdfd 0,#fbfbfb 38%,#efefef 42%,#f1f1f1 100%);border-right:1px solid #e2e2e2;border-bottom:1px solid #dcdcdc;box-shadow:inset 1px 0 0 #fff;"></div>
<div style="left:526px;top:352px;width:42px;height:27px;background:linear-gradient(to bottom,#fdfdfd 0,#fbfbfb 38%,#efefef 42%,#f1f1f1 100%);border-right:1px solid #e2e2e2;border-bottom:1px solid #dcdcdc;box-shadow:inset 1px 0 0 #fff;"></div>
<span style="left:319px;top:361.4px;font-size:11px;line-height:11px;color:#0a0a14;letter-spacing:0.32px;">Number</span>
<span style="left:383.20000000000005px;top:361.4px;font-size:11px;line-height:11px;color:#0a0a14;letter-spacing:0.79px;">Custo...</span>
<span style="left:446.5px;top:361.4px;font-size:11px;line-height:11px;color:#0a0a14;letter-spacing:0.82px;">St...</span>
<span style="left:488.20000000000005px;top:361.4px;font-size:11px;line-height:11px;color:#0a0a14;letter-spacing:0.88px;">Da...</span>
<span style="left:531.2px;top:361.4px;font-size:11px;line-height:11px;color:#0a0a14;letter-spacing:0.99px;">Ful...</span>
<div style="left:569px;top:352px;width:19px;height:27px;background:#f0f0f0;"></div>
<span style="left:368.6px;top:359.4px;font-size:7.5px;line-height:7.5px;color:#0a0a14;">1</span>
<div style="left:359px;top:364.5px;width:0px;height:0px;border-left:3.2px solid transparent;border-right:3.2px solid transparent;border-bottom:4.2px solid #b3c3d6;"></div>
<div style="left:315px;top:397.1px;width:253px;height:1px;background:#ececec;"></div>
<span style="left:315.29999999999995px;top:381.6px;font-size:11px;line-height:11px;color:#0a0aff;letter-spacing:0.40px;text-decoration:underline;">50032</span>
<span style="left:378.29999999999995px;top:383.2px;font-size:11px;line-height:11px;color:#0a0a14;letter-spacing:0.75px;">Ashley ...</span>
<span style="left:442.5px;top:383.2px;font-size:11px;line-height:11px;color:#0a0a14;letter-spacing:1.14px;">In P...</span>
<span style="left:484.5px;top:383.2px;font-size:11px;line-height:11px;color:#0a0a14;letter-spacing:0.81px;">Feb ...</span>
<span style="left:527.5px;top:383.2px;font-size:11px;line-height:11px;color:#0a0a14;letter-spacing:0.81px;">Feb ...</span>
<div style="left:315px;top:415.30000000000007px;width:253px;height:1px;background:#ececec;"></div>
<span style="left:315.29999999999995px;top:399.8px;font-size:11px;line-height:11px;color:#0a0aff;letter-spacing:0.40px;text-decoration:underline;">50033</span>
<span style="left:378.29999999999995px;top:401.4px;font-size:11px;line-height:11px;color:#0a0a14;letter-spacing:0.43px;">Bike World</span>
<span style="left:442.5px;top:401.4px;font-size:11px;line-height:11px;color:#0a0a14;letter-spacing:0.52px;">Issued</span>
<span style="left:484.5px;top:401.4px;font-size:11px;line-height:11px;color:#0a0a14;letter-spacing:0.81px;">Feb ...</span>
<span style="left:527.5px;top:401.4px;font-size:11px;line-height:11px;color:#0a0a14;letter-spacing:0.81px;">Feb ...</span>
<div style="left:315px;top:433.5px;width:253px;height:1px;background:#ececec;"></div>
<span style="left:315.29999999999995px;top:418.0px;font-size:11px;line-height:11px;color:#0a0aff;letter-spacing:0.40px;text-decoration:underline;">50035</span>
<span style="left:378.29999999999995px;top:419.6px;font-size:11px;line-height:11px;color:#0a0a14;letter-spacing:0.36px;">Bullet Bi...</span>
<span style="left:442.5px;top:419.6px;font-size:11px;line-height:11px;color:#0a0a14;letter-spacing:0.52px;">Issued</span>
<span style="left:484.5px;top:419.6px;font-size:11px;line-height:11px;color:#0a0a14;letter-spacing:0.81px;">Feb ...</span>
<span style="left:527.5px;top:419.6px;font-size:11px;line-height:11px;color:#0a0a14;letter-spacing:0.81px;">Feb ...</span>
<div style="left:315px;top:451.70000000000005px;width:253px;height:1px;background:#ececec;"></div>
<span style="left:315.29999999999995px;top:436.2px;font-size:11px;line-height:11px;color:#0a0aff;letter-spacing:0.40px;text-decoration:underline;">50037</span>
<span style="left:378.29999999999995px;top:437.8px;font-size:11px;line-height:11px;color:#0a0a14;letter-spacing:0.81px;">Andrea ...</span>
<span style="left:442.5px;top:437.8px;font-size:11px;line-height:11px;color:#0a0a14;letter-spacing:1.14px;">In P...</span>
<span style="left:484.5px;top:437.8px;font-size:11px;line-height:11px;color:#0a0a14;letter-spacing:0.81px;">Feb ...</span>
<span style="left:527.5px;top:437.8px;font-size:11px;line-height:11px;color:#0a0a14;letter-spacing:0.81px;">Feb ...</span>
<div style="left:315px;top:469.9px;width:253px;height:1px;background:#ececec;"></div>
<span style="left:315.29999999999995px;top:454.4px;font-size:11px;line-height:11px;color:#0a0aff;letter-spacing:0.40px;text-decoration:underline;">50038</span>
<span style="left:378.29999999999995px;top:456.0px;font-size:11px;line-height:11px;color:#0a0a14;letter-spacing:0.64px;">Derek D...</span>
<span style="left:442.5px;top:456.0px;font-size:11px;line-height:11px;color:#0a0a14;letter-spacing:0.52px;">Issued</span>
<span style="left:484.5px;top:456.0px;font-size:11px;line-height:11px;color:#0a0a14;letter-spacing:0.81px;">Feb ...</span>
<span style="left:527.5px;top:456.0px;font-size:11px;line-height:11px;color:#0a0a14;letter-spacing:0.81px;">Feb ...</span>
<div style="left:315px;top:488.1px;width:253px;height:1px;background:#ececec;"></div>
<span style="left:315.29999999999995px;top:472.6px;font-size:11px;line-height:11px;color:#0a0aff;letter-spacing:0.40px;text-decoration:underline;">50039</span>
<span style="left:378.29999999999995px;top:474.2px;font-size:11px;line-height:11px;color:#0a0a14;letter-spacing:0.39px;">Michelle ...</span>
<span style="left:442.5px;top:474.2px;font-size:11px;line-height:11px;color:#0a0a14;letter-spacing:1.14px;">In P...</span>
<span style="left:484.5px;top:474.2px;font-size:11px;line-height:11px;color:#0a0a14;letter-spacing:0.81px;">Feb ...</span>
<span style="left:527.5px;top:474.2px;font-size:11px;line-height:11px;color:#0a0a14;letter-spacing:0.81px;">Feb ...</span>
<div style="left:315px;top:506.29999999999995px;width:253px;height:1px;background:#ececec;"></div>
<span style="left:315.29999999999995px;top:490.8px;font-size:11px;line-height:11px;color:#0a0aff;letter-spacing:0.40px;text-decoration:underline;">50040</span>
<span style="left:378.29999999999995px;top:492.4px;font-size:11px;line-height:11px;color:#0a0a14;letter-spacing:0.62px;">Dusty&#x27;s ...</span>
<span style="left:442.5px;top:492.4px;font-size:11px;line-height:11px;color:#0a0a14;letter-spacing:0.52px;">Issued</span>
<span style="left:484.5px;top:492.4px;font-size:11px;line-height:11px;color:#0a0a14;letter-spacing:0.81px;">Feb ...</span>
<span style="left:527.5px;top:492.4px;font-size:11px;line-height:11px;color:#0a0a14;letter-spacing:0.81px;">Feb ...</span>
<div style="left:315px;top:524.5px;width:253px;height:1px;background:#ececec;"></div>
<span style="left:315.29999999999995px;top:509.0px;font-size:11px;line-height:11px;color:#0a0aff;letter-spacing:0.40px;text-decoration:underline;">50041</span>
<span style="left:378.29999999999995px;top:510.6px;font-size:11px;line-height:11px;color:#0a0a14;letter-spacing:0.46px;">Dallas C...</span>
<span style="left:442.5px;top:510.6px;font-size:11px;line-height:11px;color:#0a0a14;letter-spacing:0.52px;">Issued</span>
<span style="left:484.5px;top:510.6px;font-size:11px;line-height:11px;color:#0a0a14;letter-spacing:0.81px;">Feb ...</span>
<span style="left:527.5px;top:510.6px;font-size:11px;line-height:11px;color:#0a0a14;letter-spacing:0.81px;">Feb ...</span>
<div style="left:377px;top:379px;width:1px;height:150px;background:#ececec;"></div>
<div style="left:440px;top:379px;width:1px;height:150px;background:#ececec;"></div>
<div style="left:482px;top:379px;width:1px;height:150px;background:#ececec;"></div>
<div style="left:525px;top:379px;width:1px;height:150px;background:#ececec;"></div>
<div style="left:567px;top:379px;width:1px;height:150px;background:#ececec;"></div>
<div style="left:569px;top:379px;width:19px;height:150px;background:#f0efed;"></div>
<div style="left:570.5px;top:401.5px;width:16px;height:130px;border:1px solid #979797;border-radius:3px;background:linear-gradient(to right,#f5f5f5 0,#e9e9eb 45%,#d6d6d9 55%,#c9c9cd 100%);"></div>
<div style="left:574px;top:460.0px;width:9px;height:1px;background:#5c5c5c;"></div>
<div style="left:574px;top:462.6px;width:9px;height:1px;background:#5c5c5c;"></div>
<div style="left:574px;top:465.20000000000005px;width:9px;height:1px;background:#5c5c5c;"></div>
<div style="left:574px;top:467.79999999999995px;width:9px;height:1px;background:#5c5c5c;"></div>
<div style="left:575.5px;top:388.5px;width:0px;height:0px;border-left:4px solid transparent;border-right:4px solid transparent;border-bottom:4px solid #555;"></div>
<div style="left:603px;top:343px;width:295px;height:269px;border:1px solid #9db7dd;border-top:none;background:#fff;"></div>
<div style="left:603px;top:319px;width:295px;height:25px;background:linear-gradient(to right,#464242 0,#4b4848 45%,#5c5c5c 100%);clip-path:polygon(0 4px,4px 0,calc(100% - 3px) 0,100% 3px,100% 100%,0 100%);"></div>
<div style="left:758px;top:319px;width:70px;height:25px;background-image:radial-gradient(rgba(255,255,255,.10) 0.6px,transparent 0.7px);background-size:2px 2px;"></div>
<span style="left:638px;top:326.1px;font-size:12px;line-height:12px;font-weight:700;color:#fff;letter-spacing:0.20px;-webkit-text-stroke:0;">Quick Links</span>
<div style="left:611px;top:351px;width:279px;height:200px;border:1px solid #838a94;background:#fff;"></div>
<span style="left:618px;top:368.1px;font-size:12px;line-height:12px;color:#0a0a14;letter-spacing:-0.18px;">Customer</span>
<div style="left:618px;top:381px;width:266px;height:1px;background:#8c8c8c;"></div>
<span style="left:618.5px;top:393.4px;font-size:12px;line-height:12px;color:#0a0aff;letter-spacing:0.29px;text-decoration:underline;">New Customer...</span>
<span style="left:618.5px;top:416.3px;font-size:12px;line-height:12px;color:#0a0aff;letter-spacing:0.30px;text-decoration:underline;">Sales Orders...</span>
<span style="left:618.5px;top:439.0px;font-size:12px;line-height:12px;color:#0a0aff;letter-spacing:0.27px;text-decoration:underline;">Ship Orders...</span>
<span style="left:618px;top:468.1px;font-size:12px;line-height:12px;color:#0a0a14;letter-spacing:0.05px;">Vendors</span>
<div style="left:618px;top:481px;width:266px;height:1px;background:#8c8c8c;"></div>
<span style="left:618.5px;top:493.3px;font-size:12px;line-height:12px;color:#0a0aff;letter-spacing:0.38px;text-decoration:underline;">New Vendor...</span>
<span style="left:618.5px;top:516.2px;font-size:12px;line-height:12px;color:#0a0aff;letter-spacing:0.32px;text-decoration:underline;">New Part...</span>
<div style="left:302px;top:319.5px;width:2.5px;height:2px;background:#8f8f8f;"></div>
<div style="left:302px;top:324.04999999999995px;width:2.5px;height:2px;background:#8f8f8f;"></div>
<div style="left:302px;top:328.6px;width:2.5px;height:2px;background:#8f8f8f;"></div>
<div style="left:302px;top:333.15px;width:2.5px;height:2px;background:#8f8f8f;"></div>
<div style="left:302px;top:337.70000000000005px;width:2.5px;height:2px;background:#8f8f8f;"></div>
<div style="left:302px;top:342.25px;width:2.5px;height:2px;background:#8f8f8f;"></div>
<div style="left:302px;top:346.79999999999995px;width:2.5px;height:2px;background:#8f8f8f;"></div>
<div style="left:302px;top:351.35px;width:2.5px;height:2px;background:#8f8f8f;"></div>
<div style="left:302px;top:355.9px;width:2.5px;height:2px;background:#8f8f8f;"></div>
<div style="left:599px;top:319.5px;width:2.5px;height:2px;background:#8f8f8f;"></div>
<div style="left:599px;top:324.04999999999995px;width:2.5px;height:2px;background:#8f8f8f;"></div>
<div style="left:599px;top:328.6px;width:2.5px;height:2px;background:#8f8f8f;"></div>
<div style="left:599px;top:333.15px;width:2.5px;height:2px;background:#8f8f8f;"></div>
<div style="left:599px;top:337.70000000000005px;width:2.5px;height:2px;background:#8f8f8f;"></div>
<div style="left:599px;top:342.25px;width:2.5px;height:2px;background:#8f8f8f;"></div>
<div style="left:599px;top:346.79999999999995px;width:2.5px;height:2px;background:#8f8f8f;"></div>
<div style="left:599px;top:351.35px;width:2.5px;height:2px;background:#8f8f8f;"></div>
<div style="left:599px;top:355.9px;width:2.5px;height:2px;background:#8f8f8f;"></div>
<div style="left:906px;top:0px;width:19px;height:518px;background:#f0efed;border-left:1px solid #e6e5e2;"></div>
<div style="left:906.5px;top:21.5px;width:16.5px;height:360px;border:1px solid #979797;border-radius:3px;background:linear-gradient(to right,#f6f6f6 0,#ebebed 45%,#d8d8db 55%,#cacace 100%);"></div>
<div style="left:910.5px;top:196.0px;width:9px;height:1px;background:#5c5c5c;"></div>
<div style="left:910.5px;top:198.60000000000002px;width:9px;height:1px;background:#5c5c5c;"></div>
<div style="left:910.5px;top:201.2px;width:9px;height:1px;background:#5c5c5c;"></div>
<div style="left:910.5px;top:203.8px;width:9px;height:1px;background:#5c5c5c;"></div>
<div style="left:911.5px;top:9px;width:0px;height:0px;border-left:4px solid transparent;border-right:4px solid transparent;border-bottom:4px solid #4a4a4a;"></div>
<div style="left:911.5px;top:506.5px;width:0px;height:0px;border-left:4px solid transparent;border-right:4px solid transparent;border-top:4px solid #555;"></div>
</div>
<div style="left:234px;top:760px;width:934px;height:87px;background:linear-gradient(to bottom,#e6e4df 0,#dad7d0 5px,#d3d0c8 30px,#c8c4ba 60px,#c1bdb2 87px);"></div>
<div style="left:234px;top:846px;width:934px;height:2px;background:#dddad3;"></div>
<div style="left:234px;top:848px;width:934px;height:29px;background:linear-gradient(to bottom,#c6c2b6 0,#bcb7aa 60%,#b6b1a3 100%);"></div>
<div style="left:1025px;top:771px;width:132px;height:64px;background:linear-gradient(to bottom,#ffcf8c 0,#fdbb68 55%,#fbab4b 100%);border:1.5px solid #0c0c7c;"></div>
<span style="left:250.5px;top:818.0px;font-size:12px;line-height:12px;color:#0a0a14;letter-spacing:0.28px;">Transfer Orders</span>
<span style="left:364.4px;top:818.0px;font-size:12px;line-height:12px;color:#0a0a14;letter-spacing:0.13px;">Open RMA Orders</span>
<span style="left:498px;top:818.0px;font-size:12px;line-height:12px;color:#0a0a14;letter-spacing:0.04px;">Items to be Picked</span>
<span style="left:625px;top:818.0px;font-size:12px;line-height:12px;color:#0a0a14;letter-spacing:0.11px;">Items to be Received</span>
<span style="left:764px;top:818.0px;font-size:12px;line-height:12px;color:#0a0a14;letter-spacing:0.01px;">Items to be Shipped</span>
<span style="left:934px;top:818.0px;font-size:12px;line-height:12px;color:#0a0a14;letter-spacing:0.71px;">Report</span>
<span style="left:1059px;top:818.0px;font-size:12px;line-height:12px;color:#0a0a14;letter-spacing:-0.15px;">Quick Links</span>
<div style="left:245px;top:820px;width:2px;height:8px;background:#1a1a8a;"></div>
<svg style="left:237px;top:798px;" width="6" height="10" viewBox="0 0 6 10"><path d="M5.500 0.500v9l-5-4.500z" fill="#000"/></svg>
<span style="left:245px;top:856.3px;font-size:12px;line-height:12px;font-weight:700;color:#0a0a1e;letter-spacing:0.28px;">Description:</span>
<span style="left:328px;top:856.3px;font-size:12px;line-height:12px;color:#0a0a14;letter-spacing:0.09px;">Drag and drop the gadget to the dashboard</span>
<span style="left:1089px;top:856.3px;font-size:12px;line-height:12px;color:#0a0a14;letter-spacing:-0.30px;">Add</span>
<span style="left:1123px;top:856.3px;font-size:12px;line-height:12px;color:#0a0a14;letter-spacing:0.15px;">Done</span>
<span style="left:935px;top:799.3px;font-size:21.5px;line-height:21.5px;color:rgba(255,255,255,.40);letter-spacing:1.60px;font-family:'Liberation Serif',serif;">SOFTPEDIA</span>
<span style="left:956px;top:830.9px;font-size:12.5px;line-height:12.5px;color:rgba(255,255,255,.40);letter-spacing:-0.23px;font-family:'Liberation Serif',serif;">www.softpedia.com</span>
<svg style="left:0;top:0;pointer-events:none" width="1200" height="909" viewBox="0 0 1200 909"><defs>
<linearGradient id="gSheet" x1="0" y1="0" x2="0" y2="1"><stop offset="0" stop-color="#eef3fb"/><stop offset="1" stop-color="#a9c0e6"/></linearGradient>
<linearGradient id="gSheetB" x1="0" y1="0" x2="0" y2="1"><stop offset="0" stop-color="#7f97c2"/><stop offset=".55" stop-color="#c7d5ee"/><stop offset="1" stop-color="#f4f7fc"/></linearGradient>
<linearGradient id="gGauge" x1="0" y1="0" x2="0" y2="1"><stop offset="0" stop-color="#fdfdfe"/><stop offset=".6" stop-color="#f2f5fa"/><stop offset="1" stop-color="#c3d3ec"/></linearGradient>
<linearGradient id="gDial" x1="0" y1="0" x2="0" y2="1"><stop offset="0" stop-color="#9db7e4"/><stop offset="1" stop-color="#f3f6fc"/></linearGradient>
<radialGradient id="sOr" cx=".35" cy=".3" r=".8"><stop offset="0" stop-color="#ffd27a"/><stop offset=".45" stop-color="#ff9f1c"/><stop offset="1" stop-color="#e87a00"/></radialGradient>
<radialGradient id="sTe" cx=".35" cy=".3" r=".8"><stop offset="0" stop-color="#5fc9b5"/><stop offset=".45" stop-color="#0f9a86"/><stop offset="1" stop-color="#06705f"/></radialGradient>
<radialGradient id="sRe" cx=".35" cy=".3" r=".8"><stop offset="0" stop-color="#f0602a"/><stop offset=".45" stop-color="#b8142a"/><stop offset="1" stop-color="#7d0a1e"/></radialGradient>
<radialGradient id="sGn" cx=".4" cy=".35" r=".75"><stop offset="0" stop-color="#9be86a"/><stop offset=".55" stop-color="#3fbf2a"/><stop offset="1" stop-color="#1f9414"/></radialGradient>
<radialGradient id="sGy" cx=".4" cy=".35" r=".75"><stop offset="0" stop-color="#c9c9c9"/><stop offset=".6" stop-color="#a3a3a3"/><stop offset="1" stop-color="#8a8a8a"/></radialGradient>
<radialGradient id="sBl" cx=".4" cy=".3" r=".8"><stop offset="0" stop-color="#5aa8ff"/><stop offset=".6" stop-color="#1464d8"/><stop offset="1" stop-color="#0a47ad"/></radialGradient>
<linearGradient id="gCur" x1="0" y1="0" x2="1" y2="1"><stop offset="0" stop-color="#b6f27a"/><stop offset=".5" stop-color="#55c92c"/><stop offset="1" stop-color="#2a9a18"/></linearGradient>
<linearGradient id="gRed" x1="0" y1="0" x2="1" y2="0"><stop offset="0" stop-color="#ee1c24"/><stop offset=".3" stop-color="#f0522a"/><stop offset=".5" stop-color="#f7941d"/><stop offset=".7" stop-color="#f0522a"/><stop offset="1" stop-color="#ee1c24"/></linearGradient>
<linearGradient id="gRma" x1="0" y1="0" x2="1" y2="0"><stop offset="0" stop-color="#2aa836"/><stop offset=".45" stop-color="#8a9a3a"/><stop offset="1" stop-color="#f0502a"/></linearGradient>
<linearGradient id="gCol" x1="0" y1="0" x2="1" y2="1"><stop offset="0" stop-color="#ffffff"/><stop offset="1" stop-color="#cfe2fb"/></linearGradient>
<linearGradient id="gFold" x1="0" y1="0" x2="1" y2="1"><stop offset="0" stop-color="#fffbd0"/><stop offset="1" stop-color="#ffd84e"/></linearGradient>
<linearGradient id="gBox" x1="0" y1="0" x2="0" y2="1"><stop offset="0" stop-color="#f7dcc4"/><stop offset="1" stop-color="#d9a982"/></linearGradient>
</defs><g transform="translate(69,84)"><rect x=".5" y=".5" width="15" height="15" rx="1.500" fill="#1e62c8" stroke="#124a9f"/><rect x="3.300" y="1" width="9.400" height="7" fill="#f3f5f8"/><path d="M4.500 3h7M4.500 5h7" stroke="#b5bac4" stroke-width=".9"/><rect x="4.300" y="10.300" width="7.800" height="5" fill="#dfe6f2"/><rect x="5.300" y="11.200" width="2.400" height="3.600" fill="#1e62c8"/></g><g transform="translate(149,84)"><path d="M1.200 6.500l4-2 1.400 1.200L13.800 2.300l1.400 9.400L4.200 15.300z" fill="#fbd24e" stroke="#e0932a" stroke-width=".9" stroke-linejoin="round"/><path d="M7.200 1.600l6-1 1.200 8.800-6 1.400z" fill="#fff6cf" stroke="#e09a28" stroke-width=".8"/><path d="M2.300 7.800l9.400-3.700 2.600 8.200L4.600 15z" fill="url(#gFold)" stroke="#d98a1a" stroke-width=".8" stroke-linejoin="round"/></g><g transform="translate(216,84)"><rect x=".8" y=".8" width="14.600" height="14.600" rx="1.300" fill="url(#gCol)" stroke="#3b8ef0" stroke-width="1.400"/><rect x=".8" y=".8" width="14.600" height="3" fill="#3b8ef0"/><path d="M8.100 3.500V15.200" stroke="#3b8ef0" stroke-width="1.500"/></g><g transform="translate(269,84)" fill="none" stroke="#2b86ea" stroke-width="2.300"><path d="M2.600 6.600C3.500 3.600 6 2.200 8.600 2.400c1.700.1 3 .8 4 2"/><path d="M13.400 9.600c-.9 2.900-3.400 4.300-6 4.100-1.700-.1-3-.8-4-2"/><path d="M14.800 1.300v5.300H9.500z" fill="#2b86ea" stroke="none"/><path d="M1.200 14.800V9.500h5.300z" fill="#5aa6f4" stroke="none"/></g><circle cx="331.500" cy="92" r="8" fill="#c9c9c9" stroke="#9a9a9a" stroke-width=".6"/><circle cx="331.300" cy="91.800" r="6.300" fill="url(#sGn)"/><circle cx="1058" cy="60" r="8" fill="url(#sGn)"/><ellipse cx="1058" cy="56.4" rx="5.6" ry="3.2" fill="#fff" opacity=".22"/><path d="M1062.6 58.9H1057.5V56.1L1053.4 60L1057.5 63.9V61.1H1062.6z" fill="#fff"/><circle cx="1082" cy="60" r="8" fill="url(#sGn)"/><ellipse cx="1082" cy="56.4" rx="5.6" ry="3.2" fill="#fff" opacity=".22"/><path d="M1077.4 58.9H1082.5V56.1L1086.6 60L1082.5 63.9V61.1H1077.4z" fill="#fff"/><g transform="translate(1098,52)"><path d="M5 9.500C5.800 4.800 8.500 2.400 11.300 3.200c3 .9 3.900 4.600 3.300 9.300" fill="none" stroke="#2a7fe6" stroke-width="3.100"/><path d="M.4 5.200l9.600 5.300-2.600 1.300.6 2.600-7 .4z" fill="#8ec6f9" stroke="#3a90ee" stroke-width=".9" stroke-linejoin="round"/></g><g transform="translate(1122.8,52) scale(0.66)"><path d="M0 3L8.500 8.500 9.300 24 5 20.500 .5 24.500z" fill="#33b41c"/><path d="M0 9l7.500 5 .8 9.500L5 20.500 .5 24.500z" fill="#2aa016" opacity=".8"/><path d="M0 1.500L1.500 0l3 .3L21.300 14.300l-4.800 1 .8 6.700-6.800-4.500L0 7z" fill="#7fe85e"/><path d="M3 4.500l12.500 11.200" stroke="#55c93a" stroke-width="1.100" fill="none"/><path d="M10.500 17.500l6.800 4.500-.8-6.700z" fill="#4cc232"/><ellipse cx="3.200" cy="4.400" rx="1.100" ry=".8" fill="#1f8a12"/></g><ellipse cx="1154" cy="59.800" rx="7.900" ry="8.700" fill="#2e2e2e"/><ellipse cx="1154" cy="60.600" rx="7.200" ry="6.600" fill="url(#sGn)"/><ellipse cx="1154" cy="54.600" rx="4.800" ry="2.100" fill="#fff" opacity=".85"/><circle cx="1155" cy="63.200" r="2.500" fill="#e0f29a" opacity=".75"/><g transform="translate(56,175) scale(1.0)"><path d="M2.500 47V23.500C2.500 10.500 12 1.500 25 1.500S47.500 10.500 47.500 23.500V47q0 2-2 2H4.500q-2 0-2-2z" fill="#262a32" opacity=".62"/><path d="M.7 45.500V23C.7 9.500 10.500.7 23.500.7S46.300 9.500 46.300 23V45.500q0 2.500-2.500 2.500H3.200q-2.500 0-2.500-2.500z" fill="url(#gGauge)" stroke="#76869f" stroke-width="1.2"/><path d="M3.600 24.500C3.600 12.500 12 4.500 23.500 4.500S43.400 12.500 43.400 24.500z" fill="url(#gDial)" stroke="#7d8fa0" stroke-width=".9"/><path d="M19 24.500l1.500-4h6l1.500 4z" fill="#7b8896"/><path d="M21.800 21.200L28.300 5.800l1.900.8L25.300 22z" fill="#f5821f"/><path d="M28.300 5.800l1.900.8-1 3z" fill="#c9560a"/><rect x="3.9" y="29.500" width="1.9" height="13" fill="#5d7384"/><rect x="10.6" y="29.500" width="1.9" height="13" fill="#5d7384"/><rect x="17.1" y="29.500" width="1.9" height="13" fill="#5d7384"/><rect x="22.9" y="29.500" width="2.6" height="13" fill="#5d7384"/><rect x="29.1" y="29.500" width="1.9" height="13" fill="#5d7384"/><rect x="35.8" y="29.500" width="1.9" height="13" fill="#5d7384"/><rect x="42.4" y="29.500" width="1.9" height="13" fill="#5d7384"/><path d="M1.300 44.500h44.400" stroke="#fff" stroke-opacity=".8" stroke-width=".8"/></g><g transform="translate(55,259) scale(1.0,1.0)"><rect x="1.700" y="1.700" width="39" height="44" fill="#23272f" opacity=".55"/><rect x=".5" y=".5" width="39" height="44" fill="url(#gSheetB)" stroke="#5f7298" stroke-width="1.1"/><rect x="4" y="4" width="8" height="1.300" fill="#6f88ba" opacity=".8"/><rect x="4" y="9" width="8" height="1.300" fill="#6f88ba" opacity=".8"/><rect x="4" y="15" width="8" height="1.300" fill="#6f88ba" opacity=".8"/><rect x="4" y="21.5" width="8" height="1.300" fill="#6f88ba" opacity=".8"/><rect x="4" y="27.5" width="8" height="1.300" fill="#6f88ba" opacity=".8"/><rect x="4" y="33" width="8" height="1.300" fill="#6f88ba" opacity=".8"/><rect x="4" y="39" width="8" height="1.300" fill="#6f88ba" opacity=".8"/><rect x="12.300" y="8.800" width="37" height="43" fill="#23272f" opacity=".62"/><rect x="10.500" y="6.500" width="37" height="43" fill="url(#gSheet)" stroke="#667aa3" stroke-width="1.1"/><rect x="12" y="8" width="34" height="12" fill="#fff" opacity=".85"/><rect x="14" y="10" width="31" height="1" fill="#8da2c8" opacity=".75"/><rect x="14" y="16" width="31" height="1" fill="#8da2c8" opacity=".75"/><rect x="14" y="22.5" width="31" height="1" fill="#8da2c8" opacity=".75"/><rect x="14" y="28.5" width="31" height="1" fill="#8da2c8" opacity=".75"/><rect x="14" y="34.5" width="31" height="1" fill="#8da2c8" opacity=".75"/><rect x="14" y="40" width="31" height="1" fill="#8da2c8" opacity=".75"/><rect x="14" y="45.5" width="31" height="1" fill="#8da2c8" opacity=".75"/><polyline points="11.700,24.300 18.200,16.800 23,21.600 29.100,14.800 33.900,16.100 38,10.300 42.700,10.300" fill="none" stroke="#ffcf1c" stroke-width="2.400" stroke-linejoin="round" stroke-linecap="round"/><polyline points="12,34.200 16.800,33.900 20.200,28.400 25.700,29.800 30.400,24 35.200,28.400 42,20.900" fill="none" stroke="#f0561e" stroke-width="2.400" stroke-linejoin="round" stroke-linecap="round"/><polyline points="11.700,42 18.900,38 25.700,43.700 31.800,38 37.300,31.100 43.400,40.700" fill="none" stroke="#2a8fe6" stroke-width="2.400" stroke-linejoin="round" stroke-linecap="round"/></g><g transform="translate(55.800,344.800)"><rect x="1.800" y="1.800" width="46.600" height="47" fill="#30343c" opacity=".45"/><rect x="0" y="0" width="46.600" height="47" fill="#6d7f97"/><rect x="0" y="0" width="46.600" height="14.600" fill="#3c3c40"/><rect x="1.400" y="2.400" width="43.800" height="11.400" fill="url(#gRed)"/><rect x="1.4" y="15.4" width="9.8" height="5.8" fill="#dbe4f4"/><rect x="12.2" y="15.4" width="10" height="5.8" fill="#dbe4f4"/><rect x="24.2" y="15.4" width="9.5" height="5.8" fill="#dbe4f4"/><rect x="35.1" y="15.4" width="9.9" height="5.8" fill="#dbe4f4"/><rect x="1.4" y="22.9" width="9.8" height="6.1" fill="#c3d2ee"/><rect x="12.2" y="22.9" width="10" height="6.1" fill="#c3d2ee"/><rect x="24.2" y="22.9" width="9.5" height="6.1" fill="#c3d2ee"/><rect x="35.1" y="22.9" width="9.9" height="6.1" fill="#c3d2ee"/><rect x="1.4" y="31" width="9.8" height="6.2" fill="#b3c7ea"/><rect x="12.2" y="31" width="10" height="6.2" fill="#b3c7ea"/><rect x="24.2" y="31" width="9.5" height="6.2" fill="#b3c7ea"/><rect x="35.1" y="31" width="9.9" height="6.2" fill="#b3c7ea"/><rect x="1.4" y="38.9" width="9.8" height="6.4" fill="#a9c0e7"/><rect x="12.2" y="38.9" width="10" height="6.4" fill="#a9c0e7"/><rect x="24.2" y="38.9" width="9.5" height="6.4" fill="#a9c0e7"/><rect x="35.1" y="38.9" width="9.9" height="6.4" fill="#a9c0e7"/><rect x="1.400" y="22.900" width="9.800" height="6.100" fill="#ffa126"/><rect x="3.400" y="24.400" width="5" height="3" fill="#ffd08a" opacity=".8"/><rect x="35.100" y="38.900" width="9.900" height="6.400" fill="#8c1020"/><rect x="38" y="40.500" width="4.500" height="3.500" fill="#e0582a"/></g><text x="78.800" y="356.300" font-family="'Liberation Sans',sans-serif" font-size="10.500" font-weight="700" fill="#fff" text-anchor="middle" stroke="#5a2a10" stroke-width=".3" paint-order="stroke">Jul</text><g transform="translate(35.5,594.3) scale(0.525,0.525)"><rect x="1.700" y="1.700" width="39" height="44" fill="#23272f" opacity=".55"/><rect x=".5" y=".5" width="39" height="44" fill="url(#gSheetB)" stroke="#5f7298" stroke-width="1.1"/><rect x="4" y="4" width="8" height="1.300" fill="#6f88ba" opacity=".8"/><rect x="4" y="9" width="8" height="1.300" fill="#6f88ba" opacity=".8"/><rect x="4" y="15" width="8" height="1.300" fill="#6f88ba" opacity=".8"/><rect x="4" y="21.5" width="8" height="1.300" fill="#6f88ba" opacity=".8"/><rect x="4" y="27.5" width="8" height="1.300" fill="#6f88ba" opacity=".8"/><rect x="4" y="33" width="8" height="1.300" fill="#6f88ba" opacity=".8"/><rect x="4" y="39" width="8" height="1.300" fill="#6f88ba" opacity=".8"/><rect x="12.300" y="8.800" width="37" height="43" fill="#23272f" opacity=".62"/><rect x="10.500" y="6.500" width="37" height="43" fill="url(#gSheet)" stroke="#667aa3" stroke-width="1.1"/><rect x="12" y="8" width="34" height="12" fill="#fff" opacity=".85"/><rect x="14" y="10" width="31" height="1" fill="#8da2c8" opacity=".75"/><rect x="14" y="16" width="31" height="1" fill="#8da2c8" opacity=".75"/><rect x="14" y="22.5" width="31" height="1" fill="#8da2c8" opacity=".75"/><rect x="14" y="28.5" width="31" height="1" fill="#8da2c8" opacity=".75"/><rect x="14" y="34.5" width="31" height="1" fill="#8da2c8" opacity=".75"/><rect x="14" y="40" width="31" height="1" fill="#8da2c8" opacity=".75"/><rect x="14" y="45.5" width="31" height="1" fill="#8da2c8" opacity=".75"/><polyline points="11.700,24.300 18.200,16.800 23,21.600 29.100,14.800 33.900,16.100 38,10.300 42.700,10.300" fill="none" stroke="#ffcf1c" stroke-width="2.400" stroke-linejoin="round" stroke-linecap="round"/><polyline points="12,34.200 16.800,33.900 20.200,28.400 25.700,29.800 30.400,24 35.200,28.400 42,20.900" fill="none" stroke="#f0561e" stroke-width="2.400" stroke-linejoin="round" stroke-linecap="round"/><polyline points="11.700,42 18.900,38 25.700,43.700 31.800,38 37.300,31.100 43.400,40.700" fill="none" stroke="#2a8fe6" stroke-width="2.400" stroke-linejoin="round" stroke-linecap="round"/></g><polygon points="54.5,635.5 60.5,638.3 60.5,646.9 54.5,649.7 48.5,646.9 48.5,638.3" fill="#1e1e1e" opacity=".35" transform="translate(.7,.8)"/><linearGradient id="cg23" x1="0" y1="0" x2="0" y2="1"><stop offset="0" stop-color="#22a08e"/><stop offset="1" stop-color="#0b7d6e"/></linearGradient><polygon points="48.5,638.3 54.5,641.2 60.5,638.3 60.5,646.9 54.5,649.7 48.5,646.9" fill="url(#cg23)"/><polygon points="54.5,635.5 60.5,638.3 54.5,641.2 48.5,638.3" fill="#74c6b6"/><path d="M48.5 638.3L54.5 641.2L60.5 638.3M54.5 641.2V649.7" stroke="#7f8fa8" stroke-opacity=".85" stroke-width=".8" fill="none"/><polygon points="54.5,635.5 60.5,638.3 60.5,646.9 54.5,649.7 48.5,646.9 48.5,638.3" fill="none" stroke="#6f7f98" stroke-opacity=".7" stroke-width=".6"/><polygon points="42.2,641.7 49.0,644.0 49.0,651.0 42.2,653.3 35.4,651.0 35.4,644.0" fill="#1e1e1e" opacity=".35" transform="translate(.7,.8)"/><linearGradient id="cg29" x1="0" y1="0" x2="0" y2="1"><stop offset="0" stop-color="#c4202e"/><stop offset="1" stop-color="#8f0a26"/></linearGradient><polygon points="35.4,644.0 42.2,646.3 49.0,644.0 49.0,651.0 42.2,653.3 35.4,651.0" fill="url(#cg29)"/><polygon points="42.2,641.7 49.0,644.0 42.2,646.3 35.4,644.0" fill="#f0562a"/><path d="M35.4 644.0L42.2 646.3L49.0 644.0M42.2 646.3V653.3" stroke="#7f8fa8" stroke-opacity=".85" stroke-width=".8" fill="none"/><polygon points="42.2,641.7 49.0,644.0 49.0,651.0 42.2,653.3 35.4,651.0 35.4,644.0" fill="none" stroke="#6f7f98" stroke-opacity=".7" stroke-width=".6"/><polygon points="42.2,631.2 49.0,633.3 49.0,639.7 42.2,641.8 35.4,639.7 35.4,633.3" fill="#1e1e1e" opacity=".35" transform="translate(.7,.8)"/><linearGradient id="cg35" x1="0" y1="0" x2="0" y2="1"><stop offset="0" stop-color="#ffad33"/><stop offset="1" stop-color="#f58a10"/></linearGradient><polygon points="35.4,633.3 42.2,635.4 49.0,633.3 49.0,639.7 42.2,641.8 35.4,639.7" fill="url(#cg35)"/><polygon points="42.2,631.2 49.0,633.3 42.2,635.4 35.4,633.3" fill="#ffd27a"/><path d="M35.4 633.3L42.2 635.4L49.0 633.3M42.2 635.4V641.8" stroke="#7f8fa8" stroke-opacity=".85" stroke-width=".8" fill="none"/><polygon points="42.2,631.2 49.0,633.3 49.0,639.7 42.2,641.8 35.4,639.7 35.4,633.3" fill="none" stroke="#6f7f98" stroke-opacity=".7" stroke-width=".6"/><rect x="37.2" y="666.7" width="20.5" height="22.5" fill="#3a3f4a" opacity=".45"/><rect x="36" y="665.5" width="20.5" height="22.5" fill="url(#gSheet)" stroke="#7e90b4" stroke-width="1"/><rect x="36.5" y="666.0" width="19.5" height="1.6" fill="#8d9c9f"/><rect x="38.5" y="668.6" width="15.6" height="4.0" fill="#e9e5da" stroke="#b9b4a6" stroke-width=".5"/><rect x="38.5" y="675.0" width="15.6" height="0.8" fill="#8fa6d0" opacity=".7"/><rect x="38.5" y="677.9" width="15.6" height="0.8" fill="#8fa6d0" opacity=".7"/><rect x="38.5" y="680.8" width="15.6" height="0.8" fill="#8fa6d0" opacity=".7"/><rect x="38.5" y="683.7" width="15.6" height="0.8" fill="#8fa6d0" opacity=".7"/><polygon points="44.0,678.4 49.0,680.8 49.0,688.2 44.0,690.6 39.0,688.2 39.0,680.8" fill="#1e1e1e" opacity=".35" transform="translate(.7,.8)"/><linearGradient id="cg49" x1="0" y1="0" x2="0" y2="1"><stop offset="0" stop-color="#9fe04a"/><stop offset="1" stop-color="#4fae22"/></linearGradient><polygon points="39.0,680.8 44.0,683.3 49.0,680.8 49.0,688.2 44.0,690.6 39.0,688.2" fill="url(#cg49)"/><polygon points="44.0,678.4 49.0,680.8 44.0,683.3 39.0,680.8" fill="#e6f58a"/><path d="M39.0 680.8L44.0 683.3L49.0 680.8M44.0 683.3V690.6" stroke="#7f8fa8" stroke-opacity=".85" stroke-width=".8" fill="none"/><polygon points="44.0,678.4 49.0,680.8 49.0,688.2 44.0,690.6 39.0,688.2 39.0,680.8" fill="none" stroke="#6f7f98" stroke-opacity=".7" stroke-width=".6"/><polygon points="55.2,679.6 60.5,681.8 60.5,688.6 55.2,690.8 49.9,688.6 49.9,681.8" fill="#1e1e1e" opacity=".35" transform="translate(.7,.8)"/><linearGradient id="cg55" x1="0" y1="0" x2="0" y2="1"><stop offset="0" stop-color="#c4202e"/><stop offset="1" stop-color="#8f0a26"/></linearGradient><polygon points="49.9,681.8 55.2,684.1 60.5,681.8 60.5,688.6 55.2,690.8 49.9,688.6" fill="url(#cg55)"/><polygon points="55.2,679.6 60.5,681.8 55.2,684.1 49.9,681.8" fill="#f0562a"/><path d="M49.9 681.8L55.2 684.1L60.5 681.8M55.2 684.1V690.8" stroke="#7f8fa8" stroke-opacity=".85" stroke-width=".8" fill="none"/><polygon points="55.2,679.6 60.5,681.8 60.5,688.6 55.2,690.8 49.9,688.6 49.9,681.8" fill="none" stroke="#6f7f98" stroke-opacity=".7" stroke-width=".6"/><polygon points="55.2,668.5 60.5,670.6 60.5,677.0 55.2,679.1 49.9,677.0 49.9,670.6" fill="#1e1e1e" opacity=".35" transform="translate(.7,.8)"/><linearGradient id="cg61" x1="0" y1="0" x2="0" y2="1"><stop offset="0" stop-color="#ffad33"/><stop offset="1" stop-color="#f58a10"/></linearGradient><polygon points="49.9,670.6 55.2,672.7 60.5,670.6 60.5,677.0 55.2,679.1 49.9,677.0" fill="url(#cg61)"/><polygon points="55.2,668.5 60.5,670.6 55.2,672.7 49.9,670.6" fill="#ffd27a"/><path d="M49.9 670.6L55.2 672.7L60.5 670.6M55.2 672.7V679.1" stroke="#7f8fa8" stroke-opacity=".85" stroke-width=".8" fill="none"/><polygon points="55.2,668.5 60.5,670.6 60.5,677.0 55.2,679.1 49.9,677.0 49.9,670.6" fill="none" stroke="#6f7f98" stroke-opacity=".7" stroke-width=".6"/><rect x="37.5" y="702.7" width="20.5" height="22.5" fill="#3a3f4a" opacity=".45"/><rect x="36.3" y="701.5" width="20.5" height="22.5" fill="url(#gSheet)" stroke="#7e90b4" stroke-width="1"/><rect x="36.8" y="702.0" width="19.5" height="1.6" fill="#8d9c9f"/><rect x="38.8" y="704.6" width="15.6" height="4.0" fill="#e9e5da" stroke="#b9b4a6" stroke-width=".5"/><rect x="38.8" y="711.0" width="15.6" height="0.8" fill="#8fa6d0" opacity=".7"/><rect x="38.8" y="713.9" width="15.6" height="0.8" fill="#8fa6d0" opacity=".7"/><rect x="38.8" y="716.8" width="15.6" height="0.8" fill="#8fa6d0" opacity=".7"/><rect x="38.8" y="719.7" width="15.6" height="0.8" fill="#8fa6d0" opacity=".7"/><circle cx="55.1" cy="710.9" r="4.8" fill="#222" opacity=".35"/><circle cx="54.6" cy="710.3" r="4.5" fill="url(#sTe)"/><circle cx="47.1" cy="716.4" r="4.8999999999999995" fill="#222" opacity=".35"/><circle cx="46.6" cy="715.8" r="4.6" fill="url(#sOr)"/><circle cx="55.9" cy="720.4" r="4.8" fill="#222" opacity=".35"/><circle cx="55.4" cy="719.8" r="4.5" fill="url(#sRe)"/><polygon points="49.37,742.13 49.37,743.47 47.55,744.30 47.16,745.24 47.86,747.11 46.91,748.06 45.04,747.36 44.10,747.75 43.27,749.57 41.93,749.57 41.10,747.75 40.16,747.36 38.29,748.06 37.34,747.11 38.04,745.24 37.65,744.30 35.83,743.47 35.83,742.13 37.65,741.30 38.04,740.36 37.34,738.49 38.29,737.54 40.16,738.24 41.10,737.85 41.93,736.03 43.27,736.03 44.10,737.85 45.04,738.24 46.91,737.54 47.86,738.49 47.16,740.36 47.55,741.30" fill="#2a2a2a" opacity=".55" transform="translate(.7,.8)"/><polygon points="49.37,742.13 49.37,743.47 47.55,744.30 47.16,745.24 47.86,747.11 46.91,748.06 45.04,747.36 44.10,747.75 43.27,749.57 41.93,749.57 41.10,747.75 40.16,747.36 38.29,748.06 37.34,747.11 38.04,745.24 37.65,744.30 35.83,743.47 35.83,742.13 37.65,741.30 38.04,740.36 37.34,738.49 38.29,737.54 40.16,738.24 41.10,737.85 41.93,736.03 43.27,736.03 44.10,737.85 45.04,738.24 46.91,737.54 47.86,738.49 47.16,740.36 47.55,741.30" fill="#22a08e" stroke="#2a2a2a" stroke-opacity=".35" stroke-width=".5"/><circle cx="42.6" cy="742.8" r="2.72" fill="#f4f4f2" stroke="#2a2a2a" stroke-opacity=".45" stroke-width=".6"/><polygon points="50.87,753.43 50.87,754.77 49.05,755.60 48.66,756.54 49.36,758.41 48.41,759.36 46.54,758.66 45.60,759.05 44.77,760.87 43.43,760.87 42.60,759.05 41.66,758.66 39.79,759.36 38.84,758.41 39.54,756.54 39.15,755.60 37.33,754.77 37.33,753.43 39.15,752.60 39.54,751.66 38.84,749.79 39.79,748.84 41.66,749.54 42.60,749.15 43.43,747.33 44.77,747.33 45.60,749.15 46.54,749.54 48.41,748.84 49.36,749.79 48.66,751.66 49.05,752.60" fill="#2a2a2a" opacity=".55" transform="translate(.7,.8)"/><polygon points="50.87,753.43 50.87,754.77 49.05,755.60 48.66,756.54 49.36,758.41 48.41,759.36 46.54,758.66 45.60,759.05 44.77,760.87 43.43,760.87 42.60,759.05 41.66,758.66 39.79,759.36 38.84,758.41 39.54,756.54 39.15,755.60 37.33,754.77 37.33,753.43 39.15,752.60 39.54,751.66 38.84,749.79 39.79,748.84 41.66,749.54 42.60,749.15 43.43,747.33 44.77,747.33 45.60,749.15 46.54,749.54 48.41,748.84 49.36,749.79 48.66,751.66 49.05,752.60" fill="#b4202c" stroke="#2a2a2a" stroke-opacity=".35" stroke-width=".5"/><circle cx="44.1" cy="754.1" r="2.72" fill="#f4f4f2" stroke="#2a2a2a" stroke-opacity=".45" stroke-width=".6"/><polygon points="60.77,748.57 60.77,749.83 59.05,750.61 58.69,751.49 59.35,753.26 58.46,754.15 56.69,753.49 55.81,753.85 55.03,755.57 53.77,755.57 52.99,753.85 52.11,753.49 50.34,754.15 49.45,753.26 50.11,751.49 49.75,750.61 48.03,749.83 48.03,748.57 49.75,747.79 50.11,746.91 49.45,745.14 50.34,744.25 52.11,744.91 52.99,744.55 53.77,742.83 55.03,742.83 55.81,744.55 56.69,744.91 58.46,744.25 59.35,745.14 58.69,746.91 59.05,747.79" fill="#2a2a2a" opacity=".55" transform="translate(.7,.8)"/><polygon points="60.77,748.57 60.77,749.83 59.05,750.61 58.69,751.49 59.35,753.26 58.46,754.15 56.69,753.49 55.81,753.85 55.03,755.57 53.77,755.57 52.99,753.85 52.11,753.49 50.34,754.15 49.45,753.26 50.11,751.49 49.75,750.61 48.03,749.83 48.03,748.57 49.75,747.79 50.11,746.91 49.45,745.14 50.34,744.25 52.11,744.91 52.99,744.55 53.77,742.83 55.03,742.83 55.81,744.55 56.69,744.91 58.46,744.25 59.35,745.14 58.69,746.91 59.05,747.79" fill="#f9a52a" stroke="#2a2a2a" stroke-opacity=".35" stroke-width=".5"/><circle cx="54.4" cy="749.2" r="2.56" fill="#f4f4f2" stroke="#2a2a2a" stroke-opacity=".45" stroke-width=".6"/><rect x="37.5" y="772.2" width="20.5" height="22.5" fill="#3a3f4a" opacity=".45"/><rect x="36.3" y="771" width="20.5" height="22.5" fill="url(#gSheet)" stroke="#7e90b4" stroke-width="1"/><rect x="36.8" y="771.5" width="19.5" height="1.6" fill="#8d9c9f"/><rect x="38.8" y="774.1" width="15.6" height="4.0" fill="#e9e5da" stroke="#b9b4a6" stroke-width=".5"/><rect x="38.8" y="780.5" width="15.6" height="0.8" fill="#8fa6d0" opacity=".7"/><rect x="38.8" y="783.4" width="15.6" height="0.8" fill="#8fa6d0" opacity=".7"/><rect x="38.8" y="786.3" width="15.6" height="0.8" fill="#8fa6d0" opacity=".7"/><rect x="38.8" y="789.2" width="15.6" height="0.8" fill="#8fa6d0" opacity=".7"/><text x="55.500" y="792" font-family="'Liberation Sans',sans-serif" font-size="26" font-weight="700" fill="#f9a12a" text-anchor="middle" stroke="#b86a10" stroke-width=".7" transform="translate(55.500 0) scale(.76 1) translate(-55.500 0)">$</text><rect x="37.5" y="808.5" width="21.3" height="22.2" fill="#3a3f4a" opacity=".45"/><rect x="36.3" y="807.3" width="21.3" height="22.2" fill="url(#gSheet)" stroke="#7e90b4" stroke-width="1"/><path d="M38.500 811.3l1.500 1.600 2.500-3.300" stroke="#1e62c8" stroke-width="1.300" fill="none"/><rect x="44" y="811.0999999999999" width="8" height="1" fill="#8fa6d0" opacity=".8"/><path d="M38.500 816.0999999999999l1.500 1.600 2.500-3.300" stroke="#1e62c8" stroke-width="1.300" fill="none"/><rect x="44" y="815.8999999999999" width="8" height="1" fill="#8fa6d0" opacity=".8"/><path d="M38.500 820.9l1.500 1.600 2.500-3.300" stroke="#1e62c8" stroke-width="1.300" fill="none"/><rect x="44" y="820.6999999999999" width="8" height="1" fill="#8fa6d0" opacity=".8"/><path d="M38.500 825.6999999999999l1.500 1.600 2.500-3.300" stroke="#1e62c8" stroke-width="1.300" fill="none"/><rect x="44" y="825.4999999999999" width="8" height="1" fill="#8fa6d0" opacity=".8"/><path d="M47.600 817.600Q47.600 810.500 54 810.500Q60.500 810.500 60.500 817.600z" fill="#fff6b0" stroke="#3a3a3a" stroke-width=".9"/><path d="M47.600 817.600Q47.800 811 53 810.800L53 817.600z" fill="#fffdf0"/><path d="M47.600 829Q47.800 822.800 54 822.800Q60.500 822.800 60.500 829z" fill="#fff6b0" stroke="#4a4a4a" stroke-width=".8"/><path d="M48.200 828.600Q48.500 823.500 53 823.200L53 828.600z" fill="#fffdf0"/><rect x="52.700" y="815.500" width="3" height="16.500" fill="#8a8f98" stroke="#4c4f56" stroke-width=".6"/><path d="M50.500 812l3 4" stroke="#333" stroke-width="1"/><g transform="translate(267,132.5) scale(0.36)"><path d="M2.500 47V23.500C2.500 10.500 12 1.500 25 1.500S47.500 10.500 47.500 23.500V47q0 2-2 2H4.500q-2 0-2-2z" fill="#262a32" opacity=".62"/><path d="M.7 45.500V23C.7 9.500 10.500.7 23.500.7S46.300 9.500 46.300 23V45.500q0 2.500-2.500 2.500H3.200q-2.500 0-2.500-2.500z" fill="url(#gGauge)" stroke="#76869f" stroke-width="1.2"/><path d="M3.600 24.500C3.600 12.500 12 4.500 23.500 4.500S43.400 12.500 43.400 24.500z" fill="url(#gDial)" stroke="#7d8fa0" stroke-width=".9"/><path d="M19 24.500l1.500-4h6l1.500 4z" fill="#7b8896"/><path d="M21.800 21.200L28.300 5.800l1.900.8L25.300 22z" fill="#f5821f"/><path d="M28.300 5.800l1.900.8-1 3z" fill="#c9560a"/><rect x="3.9" y="29.500" width="1.9" height="13" fill="#5d7384"/><rect x="10.6" y="29.500" width="1.9" height="13" fill="#5d7384"/><rect x="17.1" y="29.500" width="1.9" height="13" fill="#5d7384"/><rect x="22.9" y="29.500" width="2.6" height="13" fill="#5d7384"/><rect x="29.1" y="29.500" width="1.9" height="13" fill="#5d7384"/><rect x="35.8" y="29.500" width="1.9" height="13" fill="#5d7384"/><rect x="42.4" y="29.500" width="1.9" height="13" fill="#5d7384"/><path d="M1.300 44.500h44.400" stroke="#fff" stroke-opacity=".8" stroke-width=".8"/></g><g transform="translate(366.3,133) scale(0.335,0.335)"><rect x="1.700" y="1.700" width="39" height="44" fill="#23272f" opacity=".55"/><rect x=".5" y=".5" width="39" height="44" fill="url(#gSheetB)" stroke="#5f7298" stroke-width="1.1"/><rect x="4" y="4" width="8" height="1.300" fill="#6f88ba" opacity=".8"/><rect x="4" y="9" width="8" height="1.300" fill="#6f88ba" opacity=".8"/><rect x="4" y="15" width="8" height="1.300" fill="#6f88ba" opacity=".8"/><rect x="4" y="21.5" width="8" height="1.300" fill="#6f88ba" opacity=".8"/><rect x="4" y="27.5" width="8" height="1.300" fill="#6f88ba" opacity=".8"/><rect x="4" y="33" width="8" height="1.300" fill="#6f88ba" opacity=".8"/><rect x="4" y="39" width="8" height="1.300" fill="#6f88ba" opacity=".8"/><rect x="12.300" y="8.800" width="37" height="43" fill="#23272f" opacity=".62"/><rect x="10.500" y="6.500" width="37" height="43" fill="url(#gSheet)" stroke="#667aa3" stroke-width="1.1"/><rect x="12" y="8" width="34" height="12" fill="#fff" opacity=".85"/><rect x="14" y="10" width="31" height="1" fill="#8da2c8" opacity=".75"/><rect x="14" y="16" width="31" height="1" fill="#8da2c8" opacity=".75"/><rect x="14" y="22.5" width="31" height="1" fill="#8da2c8" opacity=".75"/><rect x="14" y="28.5" width="31" height="1" fill="#8da2c8" opacity=".75"/><rect x="14" y="34.5" width="31" height="1" fill="#8da2c8" opacity=".75"/><rect x="14" y="40" width="31" height="1" fill="#8da2c8" opacity=".75"/><rect x="14" y="45.5" width="31" height="1" fill="#8da2c8" opacity=".75"/><polyline points="11.700,24.300 18.200,16.800 23,21.600 29.100,14.800 33.900,16.100 38,10.300 42.700,10.300" fill="none" stroke="#ffcf1c" stroke-width="2.400" stroke-linejoin="round" stroke-linecap="round"/><polyline points="12,34.200 16.800,33.900 20.200,28.400 25.700,29.800 30.400,24 35.200,28.400 42,20.900" fill="none" stroke="#f0561e" stroke-width="2.400" stroke-linejoin="round" stroke-linecap="round"/><polyline points="11.700,42 18.900,38 25.700,43.700 31.800,38 37.300,31.100 43.400,40.700" fill="none" stroke="#2a8fe6" stroke-width="2.400" stroke-linejoin="round" stroke-linecap="round"/></g><g transform="translate(243.5,164.3) scale(0.68)"><path d="M2.500 47V23.500C2.500 10.500 12 1.500 25 1.500S47.500 10.500 47.500 23.500V47q0 2-2 2H4.500q-2 0-2-2z" fill="#262a32" opacity=".62"/><path d="M.7 45.500V23C.7 9.500 10.500.7 23.500.7S46.300 9.500 46.300 23V45.500q0 2.500-2.500 2.500H3.200q-2.500 0-2.500-2.500z" fill="url(#gGauge)" stroke="#76869f" stroke-width="1.2"/><path d="M3.600 24.500C3.600 12.500 12 4.500 23.500 4.500S43.400 12.500 43.400 24.500z" fill="url(#gDial)" stroke="#7d8fa0" stroke-width=".9"/><path d="M19 24.500l1.500-4h6l1.500 4z" fill="#7b8896"/><path d="M21.800 21.200L28.300 5.800l1.900.8L25.300 22z" fill="#f5821f"/><path d="M28.300 5.800l1.900.8-1 3z" fill="#c9560a"/><rect x="3.9" y="29.500" width="1.9" height="13" fill="#5d7384"/><rect x="10.6" y="29.500" width="1.9" height="13" fill="#5d7384"/><rect x="17.1" y="29.500" width="1.9" height="13" fill="#5d7384"/><rect x="22.9" y="29.500" width="2.6" height="13" fill="#5d7384"/><rect x="29.1" y="29.500" width="1.9" height="13" fill="#5d7384"/><rect x="35.8" y="29.500" width="1.9" height="13" fill="#5d7384"/><rect x="42.4" y="29.500" width="1.9" height="13" fill="#5d7384"/><path d="M1.300 44.500h44.400" stroke="#fff" stroke-opacity=".8" stroke-width=".8"/></g><circle cx="247.500" cy="220.500" r="8.200" fill="#7dba7d" stroke="#6aa86c" stroke-width=".6"/><circle cx="247.300" cy="220.500" r="6" fill="#b4d9b4"/><path d="M243.300 221h8.400M247.500 216.800v8.400" stroke="#1f5f5a" stroke-width="1.900"/><g transform="translate(264.500,212)"><rect x=".5" y=".5" width="16.500" height="15" fill="#fdfdfd" stroke="#8da6d6"/><rect x=".5" y=".5" width="16.500" height="3.300" fill="#3f86e8"/><rect x="2.300" y="6" width="2.600" height="2.600" fill="#f7941d"/><rect x="2.300" y="10.600" width="2.600" height="2.600" fill="#f7941d"/><rect x="7" y="6" width="8" height="2.800" fill="#d8d8dc"/><rect x="7" y="10.600" width="8" height="2.800" fill="#d8d8dc"/></g><rect x="251.2" y="246.2" width="20" height="23" fill="#3a3f4a" opacity=".45"/><rect x="250" y="245" width="20" height="23" fill="url(#gSheet)" stroke="#7e90b4" stroke-width="1"/><rect x="250.5" y="245.5" width="19" height="1.6" fill="#8d9c9f"/><rect x="252.4" y="248.2" width="15.2" height="4.1" fill="#e9e5da" stroke="#b9b4a6" stroke-width=".5"/><rect x="252.4" y="254.7" width="15.2" height="0.8" fill="#8fa6d0" opacity=".7"/><rect x="252.4" y="257.6" width="15.2" height="0.8" fill="#8fa6d0" opacity=".7"/><rect x="252.4" y="260.6" width="15.2" height="0.8" fill="#8fa6d0" opacity=".7"/><rect x="252.4" y="263.6" width="15.2" height="0.8" fill="#8fa6d0" opacity=".7"/><circle cx="269.0" cy="255.2" r="4.6" fill="#222" opacity=".35"/><circle cx="268.5" cy="254.6" r="4.3" fill="url(#sTe)"/><circle cx="261.5" cy="261.20000000000005" r="4.7" fill="#222" opacity=".35"/><circle cx="261" cy="260.6" r="4.4" fill="url(#sOr)"/><circle cx="269.8" cy="265.1" r="4.5" fill="#222" opacity=".35"/><circle cx="269.3" cy="264.5" r="4.2" fill="url(#sRe)"/><rect x="251.2" y="555.2" width="20" height="23" fill="#3a3f4a" opacity=".45"/><rect x="250" y="554" width="20" height="23" fill="url(#gSheet)" stroke="#7e90b4" stroke-width="1"/><rect x="250.5" y="554.5" width="19" height="1.6" fill="#8d9c9f"/><rect x="252.4" y="557.2" width="15.2" height="4.1" fill="#e9e5da" stroke="#b9b4a6" stroke-width=".5"/><rect x="252.4" y="563.7" width="15.2" height="0.8" fill="#8fa6d0" opacity=".7"/><rect x="252.4" y="566.6" width="15.2" height="0.8" fill="#8fa6d0" opacity=".7"/><rect x="252.4" y="569.6" width="15.2" height="0.8" fill="#8fa6d0" opacity=".7"/><rect x="252.4" y="572.6" width="15.2" height="0.8" fill="#8fa6d0" opacity=".7"/><circle cx="269.0" cy="564.2" r="4.6" fill="#222" opacity=".35"/><circle cx="268.5" cy="563.6" r="4.3" fill="url(#sTe)"/><circle cx="261.5" cy="570.2" r="4.7" fill="#222" opacity=".35"/><circle cx="261" cy="569.6" r="4.4" fill="url(#sOr)"/><circle cx="269.8" cy="574.1" r="4.5" fill="#222" opacity=".35"/><circle cx="269.3" cy="573.5" r="4.2" fill="url(#sRe)"/><rect x="549.2" y="246.2" width="19.5" height="22" fill="#3a3f4a" opacity=".45"/><rect x="548" y="245" width="19.5" height="22" fill="url(#gSheet)" stroke="#7e90b4" stroke-width="1"/><rect x="548.5" y="245.5" width="18.5" height="1.5" fill="#8d9c9f"/><rect x="550.3" y="248.1" width="14.8" height="4.0" fill="#e9e5da" stroke="#b9b4a6" stroke-width=".5"/><rect x="550.3" y="254.2" width="14.8" height="0.8" fill="#8fa6d0" opacity=".7"/><rect x="550.3" y="257.1" width="14.8" height="0.8" fill="#8fa6d0" opacity=".7"/><rect x="550.3" y="260.0" width="14.8" height="0.8" fill="#8fa6d0" opacity=".7"/><rect x="550.3" y="262.8" width="14.8" height="0.8" fill="#8fa6d0" opacity=".7"/><polygon points="561.28,259.32 561.28,260.28 559.96,260.88 559.68,261.56 560.19,262.91 559.51,263.59 558.16,263.08 557.48,263.36 556.88,264.68 555.92,264.68 555.32,263.36 554.64,263.08 553.29,263.59 552.61,262.91 553.12,261.56 552.84,260.88 551.52,260.28 551.52,259.32 552.84,258.72 553.12,258.04 552.61,256.69 553.29,256.01 554.64,256.52 555.32,256.24 555.92,254.92 556.88,254.92 557.48,256.24 558.16,256.52 559.51,256.01 560.19,256.69 559.68,258.04 559.96,258.72" fill="#2a2a2a" opacity=".55" transform="translate(.7,.8)"/><polygon points="561.28,259.32 561.28,260.28 559.96,260.88 559.68,261.56 560.19,262.91 559.51,263.59 558.16,263.08 557.48,263.36 556.88,264.68 555.92,264.68 555.32,263.36 554.64,263.08 553.29,263.59 552.61,262.91 553.12,261.56 552.84,260.88 551.52,260.28 551.52,259.32 552.84,258.72 553.12,258.04 552.61,256.69 553.29,256.01 554.64,256.52 555.32,256.24 555.92,254.92 556.88,254.92 557.48,256.24 558.16,256.52 559.51,256.01 560.19,256.69 559.68,258.04 559.96,258.72" fill="#f6a01e" stroke="#2a2a2a" stroke-opacity=".35" stroke-width=".5"/><circle cx="556.4" cy="259.8" r="1.96" fill="#c9d6ee" stroke="#2a2a2a" stroke-opacity=".45" stroke-width=".6"/><polygon points="570.28,253.23 570.28,254.17 568.99,254.76 568.72,255.42 569.21,256.75 568.55,257.41 567.22,256.92 566.56,257.19 565.97,258.48 565.03,258.48 564.44,257.19 563.78,256.92 562.45,257.41 561.79,256.75 562.28,255.42 562.01,254.76 560.72,254.17 560.72,253.23 562.01,252.64 562.28,251.98 561.79,250.65 562.45,249.99 563.78,250.48 564.44,250.21 565.03,248.92 565.97,248.92 566.56,250.21 567.22,250.48 568.55,249.99 569.21,250.65 568.72,251.98 568.99,252.64" fill="#2a2a2a" opacity=".55" transform="translate(.7,.8)"/><polygon points="570.28,253.23 570.28,254.17 568.99,254.76 568.72,255.42 569.21,256.75 568.55,257.41 567.22,256.92 566.56,257.19 565.97,258.48 565.03,258.48 564.44,257.19 563.78,256.92 562.45,257.41 561.79,256.75 562.28,255.42 562.01,254.76 560.72,254.17 560.72,253.23 562.01,252.64 562.28,251.98 561.79,250.65 562.45,249.99 563.78,250.48 564.44,250.21 565.03,248.92 565.97,248.92 566.56,250.21 567.22,250.48 568.55,249.99 569.21,250.65 568.72,251.98 568.99,252.64" fill="#1f9a8a" stroke="#2a2a2a" stroke-opacity=".35" stroke-width=".5"/><circle cx="565.5" cy="253.7" r="1.92" fill="#d9e2f2" stroke="#2a2a2a" stroke-opacity=".45" stroke-width=".6"/><polygon points="571.88,264.02 571.88,264.98 570.56,265.58 570.28,266.26 570.79,267.61 570.11,268.29 568.76,267.78 568.08,268.06 567.48,269.38 566.52,269.38 565.92,268.06 565.24,267.78 563.89,268.29 563.21,267.61 563.72,266.26 563.44,265.58 562.12,264.98 562.12,264.02 563.44,263.42 563.72,262.74 563.21,261.39 563.89,260.71 565.24,261.22 565.92,260.94 566.52,259.62 567.48,259.62 568.08,260.94 568.76,261.22 570.11,260.71 570.79,261.39 570.28,262.74 570.56,263.42" fill="#2a2a2a" opacity=".55" transform="translate(.7,.8)"/><polygon points="571.88,264.02 571.88,264.98 570.56,265.58 570.28,266.26 570.79,267.61 570.11,268.29 568.76,267.78 568.08,268.06 567.48,269.38 566.52,269.38 565.92,268.06 565.24,267.78 563.89,268.29 563.21,267.61 563.72,266.26 563.44,265.58 562.12,264.98 562.12,264.02 563.44,263.42 563.72,262.74 563.21,261.39 563.89,260.71 565.24,261.22 565.92,260.94 566.52,259.62 567.48,259.62 568.08,260.94 568.76,261.22 570.11,260.71 570.79,261.39 570.28,262.74 570.56,263.42" fill="#b01a28" stroke="#2a2a2a" stroke-opacity=".35" stroke-width=".5"/><circle cx="567" cy="264.5" r="1.96" fill="#d9e2f2" stroke="#2a2a2a" stroke-opacity=".45" stroke-width=".6"/><g transform="translate(845,244.3) scale(0.5,0.478)"><rect x="1.700" y="1.700" width="39" height="44" fill="#23272f" opacity=".55"/><rect x=".5" y=".5" width="39" height="44" fill="url(#gSheetB)" stroke="#5f7298" stroke-width="1.1"/><rect x="4" y="4" width="8" height="1.300" fill="#6f88ba" opacity=".8"/><rect x="4" y="9" width="8" height="1.300" fill="#6f88ba" opacity=".8"/><rect x="4" y="15" width="8" height="1.300" fill="#6f88ba" opacity=".8"/><rect x="4" y="21.5" width="8" height="1.300" fill="#6f88ba" opacity=".8"/><rect x="4" y="27.5" width="8" height="1.300" fill="#6f88ba" opacity=".8"/><rect x="4" y="33" width="8" height="1.300" fill="#6f88ba" opacity=".8"/><rect x="4" y="39" width="8" height="1.300" fill="#6f88ba" opacity=".8"/><rect x="12.300" y="8.800" width="37" height="43" fill="#23272f" opacity=".62"/><rect x="10.500" y="6.500" width="37" height="43" fill="url(#gSheet)" stroke="#667aa3" stroke-width="1.1"/><rect x="12" y="8" width="34" height="12" fill="#fff" opacity=".85"/><rect x="14" y="10" width="31" height="1" fill="#8da2c8" opacity=".75"/><rect x="14" y="16" width="31" height="1" fill="#8da2c8" opacity=".75"/><rect x="14" y="22.5" width="31" height="1" fill="#8da2c8" opacity=".75"/><rect x="14" y="28.5" width="31" height="1" fill="#8da2c8" opacity=".75"/><rect x="14" y="34.5" width="31" height="1" fill="#8da2c8" opacity=".75"/><rect x="14" y="40" width="31" height="1" fill="#8da2c8" opacity=".75"/><rect x="14" y="45.5" width="31" height="1" fill="#8da2c8" opacity=".75"/><polyline points="11.700,24.300 18.200,16.800 23,21.600 29.100,14.800 33.900,16.100 38,10.300 42.700,10.300" fill="none" stroke="#ffcf1c" stroke-width="2.400" stroke-linejoin="round" stroke-linecap="round"/><polyline points="12,34.200 16.800,33.900 20.200,28.400 25.700,29.800 30.400,24 35.200,28.400 42,20.900" fill="none" stroke="#f0561e" stroke-width="2.400" stroke-linejoin="round" stroke-linecap="round"/><polyline points="11.700,42 18.900,38 25.700,43.700 31.800,38 37.300,31.100 43.400,40.700" fill="none" stroke="#2a8fe6" stroke-width="2.400" stroke-linejoin="round" stroke-linecap="round"/></g><rect x="549.2" y="555.2" width="19.5" height="21.5" fill="#3a3f4a" opacity=".45"/><rect x="548" y="554" width="19.5" height="21.5" fill="url(#gSheet)" stroke="#7e90b4" stroke-width="1"/><rect x="548.5" y="554.5" width="18.5" height="1.5" fill="#8d9c9f"/><rect x="550.3" y="557.0" width="14.8" height="3.9" fill="#e9e5da" stroke="#b9b4a6" stroke-width=".5"/><rect x="550.3" y="563.0" width="14.8" height="0.8" fill="#8fa6d0" opacity=".7"/><rect x="550.3" y="565.8" width="14.8" height="0.8" fill="#8fa6d0" opacity=".7"/><rect x="550.3" y="568.6" width="14.8" height="0.8" fill="#8fa6d0" opacity=".7"/><rect x="550.3" y="571.4" width="14.8" height="0.8" fill="#8fa6d0" opacity=".7"/><polygon points="556.0,567.2 560.8,569.5 560.8,576.5 556.0,578.8 551.2,576.5 551.2,569.5" fill="#1e1e1e" opacity=".35" transform="translate(.7,.8)"/><linearGradient id="cg169" x1="0" y1="0" x2="0" y2="1"><stop offset="0" stop-color="#9fe04a"/><stop offset="1" stop-color="#4fae22"/></linearGradient><polygon points="551.2,569.5 556.0,571.8 560.8,569.5 560.8,576.5 556.0,578.8 551.2,576.5" fill="url(#cg169)"/><polygon points="556.0,567.2 560.8,569.5 556.0,571.8 551.2,569.5" fill="#e6f58a"/><path d="M551.2 569.5L556.0 571.8L560.8 569.5M556.0 571.8V578.8" stroke="#7f8fa8" stroke-opacity=".85" stroke-width=".8" fill="none"/><polygon points="556.0,567.2 560.8,569.5 560.8,576.5 556.0,578.8 551.2,576.5 551.2,569.5" fill="none" stroke="#6f7f98" stroke-opacity=".7" stroke-width=".6"/><polygon points="567.2,568.1 572.3,570.3 572.3,576.7 567.2,578.9 562.1,576.7 562.1,570.3" fill="#1e1e1e" opacity=".35" transform="translate(.7,.8)"/><linearGradient id="cg175" x1="0" y1="0" x2="0" y2="1"><stop offset="0" stop-color="#c4202e"/><stop offset="1" stop-color="#8f0a26"/></linearGradient><polygon points="562.1,570.3 567.2,572.4 572.3,570.3 572.3,576.7 567.2,578.9 562.1,576.7" fill="url(#cg175)"/><polygon points="567.2,568.1 572.3,570.3 567.2,572.4 562.1,570.3" fill="#f0562a"/><path d="M562.1 570.3L567.2 572.4L572.3 570.3M567.2 572.4V578.9" stroke="#7f8fa8" stroke-opacity=".85" stroke-width=".8" fill="none"/><polygon points="567.2,568.1 572.3,570.3 572.3,576.7 567.2,578.9 562.1,576.7 562.1,570.3" fill="none" stroke="#6f7f98" stroke-opacity=".7" stroke-width=".6"/><polygon points="567.2,557.4 572.3,559.4 572.3,565.6 567.2,567.6 562.1,565.6 562.1,559.4" fill="#1e1e1e" opacity=".35" transform="translate(.7,.8)"/><linearGradient id="cg181" x1="0" y1="0" x2="0" y2="1"><stop offset="0" stop-color="#ffad33"/><stop offset="1" stop-color="#f58a10"/></linearGradient><polygon points="562.1,559.4 567.2,561.5 572.3,559.4 572.3,565.6 567.2,567.6 562.1,565.6" fill="url(#cg181)"/><polygon points="567.2,557.4 572.3,559.4 567.2,561.5 562.1,559.4" fill="#ffd27a"/><path d="M562.1 559.4L567.2 561.5L572.3 559.4M567.2 561.5V567.6" stroke="#7f8fa8" stroke-opacity=".85" stroke-width=".8" fill="none"/><polygon points="567.2,557.4 572.3,559.4 572.3,565.6 567.2,567.6 562.1,565.6 562.1,559.4" fill="none" stroke="#6f7f98" stroke-opacity=".7" stroke-width=".6"/><g transform="translate(847.7,554.2) scale(1.0)"><path d="M0 3L8.500 8.500 9.300 24 5 20.500 .5 24.500z" fill="#33b41c"/><path d="M0 9l7.500 5 .8 9.500L5 20.500 .5 24.500z" fill="#2aa016" opacity=".8"/><path d="M0 1.500L1.500 0l3 .3L21.300 14.300l-4.800 1 .8 6.700-6.800-4.500L0 7z" fill="#7fe85e"/><path d="M3 4.500l12.500 11.200" stroke="#55c93a" stroke-width="1.100" fill="none"/><path d="M10.500 17.500l6.800 4.500-.8-6.700z" fill="#4cc232"/><ellipse cx="3.200" cy="4.400" rx="1.100" ry=".8" fill="#1f8a12"/></g><circle cx="265" cy="519.5" r="8" fill="url(#sGy)"/><ellipse cx="265" cy="515.9" rx="5.6" ry="3.2" fill="#fff" opacity=".22"/><path d="M269.6 518.4H264.5V515.6L260.4 519.5L264.5 523.4V520.6H269.6z" fill="#dcdcdc"/><circle cx="516" cy="519.5" r="8" fill="url(#sGy)"/><ellipse cx="516" cy="515.9" rx="5.6" ry="3.2" fill="#fff" opacity=".22"/><path d="M511.4 518.4H516.5V515.6L520.6 519.5L516.5 523.4V520.6H511.4z" fill="#dcdcdc"/><circle cx="563" cy="519.5" r="8" fill="url(#sBl)"/><ellipse cx="563" cy="515.9" rx="5.6" ry="3.2" fill="#fff" opacity=".22"/><path d="M567.6 518.4H562.5V515.6L558.4 519.5L562.5 523.4V520.6H567.6z" fill="#fff"/><circle cx="813.5" cy="519.5" r="8" fill="url(#sBl)"/><ellipse cx="813.5" cy="515.9" rx="5.6" ry="3.2" fill="#fff" opacity=".22"/><path d="M808.9 518.4H814.0V515.6L818.1 519.5L814.0 523.4V520.6H808.9z" fill="#fff"/><g fill="#a5a5a5" stroke="#8c8c8c" stroke-width=".6"><rect x="883" y="506.500" width="3.500" height="15"/><path d="M898 506.500v15l-9.500-7.500z"/><path d="M927.500 506.500v15l-11-7.500z"/><path d="M1011.500 506.500v15l11-7.500z"/><path d="M1041 506.500v15l9.500-7.500z"/><rect x="1052" y="506.500" width="3.500" height="15"/></g><g transform="translate(1098,502)"><rect x=".5" y=".5" width="22.500" height="23" rx="2" fill="#e3ecf9" stroke="#3f7fd0"/><rect x="2.500" y="2.500" width="18.500" height="19" fill="none" stroke="#222" stroke-width="1" stroke-dasharray="1 1"/><path d="M7 5.500h7l3 3V19H7z" fill="#fff" stroke="#7a8aa8" stroke-width=".8"/><path d="M9.500 13.800h5v-2.600l4.500 4-4.500 4v-2.600h-5z" fill="#2fae2f" stroke="#157a15" stroke-width=".6"/></g><rect x="262.7" y="777.7" width="28" height="31" fill="#3a3f4a" opacity=".45"/><rect x="261.5" y="776.5" width="28" height="31" fill="url(#gSheet)" stroke="#7e90b4" stroke-width="1"/><rect x="262.0" y="777.0" width="27" height="2.2" fill="#8d9c9f"/><rect x="264.9" y="780.8" width="21.3" height="5.6" fill="#e9e5da" stroke="#b9b4a6" stroke-width=".5"/><rect x="264.9" y="789.5" width="21.3" height="1.1" fill="#8fa6d0" opacity=".7"/><rect x="264.9" y="793.5" width="21.3" height="1.1" fill="#8fa6d0" opacity=".7"/><rect x="264.9" y="797.6" width="21.3" height="1.1" fill="#8fa6d0" opacity=".7"/><rect x="264.9" y="801.6" width="21.3" height="1.1" fill="#8fa6d0" opacity=".7"/><g transform="translate(273.500,788.500)"><path d="M1 7.500l3.500-5.500 3 3.500L11 .5l3.500 5 3-3.500 2.500 5.500z" fill="#f3c9a6" stroke="#9a7a62" stroke-width=".7"/><rect x=".8" y="7.500" width="19" height="12.500" rx="1.500" fill="url(#gBox)" stroke="#8c8c8c" stroke-width=".9"/><path d="M10.300 7.500v12.500" stroke="#fff" stroke-width="1.600"/><path d="M1.500 11h17.500" stroke="#fff" stroke-opacity=".7" stroke-width=".8"/></g><rect x="398.7" y="777.7" width="27.5" height="31" fill="#3a3f4a" opacity=".45"/><rect x="397.5" y="776.5" width="27.5" height="31" fill="url(#gSheet)" stroke="#7e90b4" stroke-width="1"/><rect x="398.0" y="777.0" width="26.5" height="2.2" fill="#8d9c9f"/><rect x="400.8" y="780.8" width="20.9" height="5.6" fill="#e9e5da" stroke="#b9b4a6" stroke-width=".5"/><rect x="400.8" y="789.5" width="20.9" height="1.1" fill="#8fa6d0" opacity=".7"/><rect x="400.8" y="793.5" width="20.9" height="1.1" fill="#8fa6d0" opacity=".7"/><rect x="400.8" y="797.6" width="20.9" height="1.1" fill="#8fa6d0" opacity=".7"/><rect x="400.8" y="801.6" width="20.9" height="1.1" fill="#8fa6d0" opacity=".7"/><path d="M405.500 795h16.500v-2.500l8.200 8.800-8.200 8.800v-2.500h-16.500a6.300 6.300 0 0 1 0-12.600z" fill="url(#gRma)" stroke="#444" stroke-opacity=".3" stroke-width=".6"/><rect x="533.7" y="777.5" width="27" height="30" fill="#3a3f4a" opacity=".45"/><rect x="532.5" y="776.3" width="27" height="30" fill="url(#gSheet)" stroke="#7e90b4" stroke-width="1"/><rect x="533.0" y="776.8" width="26" height="2.1" fill="#8d9c9f"/><rect x="535.7" y="780.5" width="20.5" height="5.4" fill="#e9e5da" stroke="#b9b4a6" stroke-width=".5"/><rect x="535.7" y="788.9" width="20.5" height="1.1" fill="#8fa6d0" opacity=".7"/><rect x="535.7" y="792.8" width="20.5" height="1.1" fill="#8fa6d0" opacity=".7"/><rect x="535.7" y="796.7" width="20.5" height="1.1" fill="#8fa6d0" opacity=".7"/><rect x="535.7" y="800.6" width="20.5" height="1.1" fill="#8fa6d0" opacity=".7"/><path d="M536 800.500l9-5.500 8-3 5 2 6.500 4.500q1.500 1.500-.5 2.500l-7.500 6-9 1.500-7-1z" fill="#efece6" stroke="#8e8a84" stroke-width=".8"/><path d="M558 805.500l5.500-3M556.500 807.500l5-2.500" stroke="#8e8a84" stroke-width=".7"/><circle cx="554.1" cy="798.8000000000001" r="6.3" fill="#222" opacity=".35"/><circle cx="553.6" cy="798.2" r="6" fill="url(#sOr)"/><g transform="translate(667,776)"><path d="M1.500 9.500L9 3.500 22 .5l11 5.500v12.500L20 24 1.500 19z" fill="#1e2530" opacity=".4" transform="translate(.8,.9)"/><path d="M1.500 9.500L9 3.500 22 .5l11 5.500L20 13z" fill="#bccde4" stroke="#6f7f98" stroke-width=".8" stroke-linejoin="round"/><path d="M10 5l9-2.300 5 2.300-9.500 3.500z" fill="#e9eef6"/><path d="M1.500 9.500L20 13v11L1.500 19z" fill="#9cb3d3" stroke="#6f7f98" stroke-width=".8" stroke-linejoin="round"/><path d="M20 13l13-7v12.500L20 24z" fill="#c6d5ea" stroke="#6f7f98" stroke-width=".8" stroke-linejoin="round"/><path d="M4.500 12.500l5 1v6l-5-1.300z" fill="#22252b"/><path d="M21 15l7-3.300v-2l4.500 2.300-4.500 6.200v-2L21 19.500z" fill="#15171b"/></g><circle cx="672.8" cy="804.6" r="5.0" fill="#222" opacity=".35"/><circle cx="672.3" cy="804" r="4.7" fill="url(#sOr)"/><circle cx="684.0" cy="804.6" r="5.0" fill="#222" opacity=".35"/><circle cx="683.5" cy="804" r="4.7" fill="url(#sTe)"/><circle cx="695.5" cy="804.6" r="5.0" fill="#222" opacity=".35"/><circle cx="695" cy="804" r="4.7" fill="url(#sRe)"/><g transform="translate(802,776)"><path d="M1.500 9.500L9 3.500 22 .5l11 5.500v12.500L20 24 1.500 19z" fill="#1e2530" opacity=".4" transform="translate(.8,.9)"/><path d="M1.500 9.500L9 3.500 22 .5l11 5.500L20 13z" fill="#bccde4" stroke="#6f7f98" stroke-width=".8" stroke-linejoin="round"/><path d="M10 5l9-2.300 5 2.300-9.500 3.500z" fill="#e9eef6"/><path d="M1.500 9.500L20 13v11L1.500 19z" fill="#9cb3d3" stroke="#6f7f98" stroke-width=".8" stroke-linejoin="round"/><path d="M20 13l13-7v12.500L20 24z" fill="#c6d5ea" stroke="#6f7f98" stroke-width=".8" stroke-linejoin="round"/><path d="M4 12.500l8 1.600v-2l5 4.500-5 2.500v-2L4 15.500z" fill="#3f7a84"/><path d="M23.500 15.500l5-2.500v6.500l-5 2.500z" fill="#2a2d33"/></g><polygon points="807.4,798.1 812.7,800.3 812.7,807.1 807.4,809.3 802.1,807.1 802.1,800.3" fill="#1e1e1e" opacity=".35" transform="translate(.7,.8)"/><linearGradient id="cg239" x1="0" y1="0" x2="0" y2="1"><stop offset="0" stop-color="#ffad33"/><stop offset="1" stop-color="#f58a10"/></linearGradient><polygon points="802.1,800.3 807.4,802.6 812.7,800.3 812.7,807.1 807.4,809.3 802.1,807.1" fill="url(#cg239)"/><polygon points="807.4,798.1 812.7,800.3 807.4,802.6 802.1,800.3" fill="#ffd27a"/><path d="M802.1 800.3L807.4 802.6L812.7 800.3M807.4 802.6V809.3" stroke="#7f8fa8" stroke-opacity=".85" stroke-width=".8" fill="none"/><polygon points="807.4,798.1 812.7,800.3 812.7,807.1 807.4,809.3 802.1,807.1 802.1,800.3" fill="none" stroke="#6f7f98" stroke-opacity=".7" stroke-width=".6"/><polygon points="830.4,798.1 835.7,800.3 835.7,807.1 830.4,809.3 825.1,807.1 825.1,800.3" fill="#1e1e1e" opacity=".35" transform="translate(.7,.8)"/><linearGradient id="cg245" x1="0" y1="0" x2="0" y2="1"><stop offset="0" stop-color="#22a08e"/><stop offset="1" stop-color="#0b7d6e"/></linearGradient><polygon points="825.1,800.3 830.4,802.6 835.7,800.3 835.7,807.1 830.4,809.3 825.1,807.1" fill="url(#cg245)"/><polygon points="830.4,798.1 835.7,800.3 830.4,802.6 825.1,800.3" fill="#74c6b6"/><path d="M825.1 800.3L830.4 802.6L835.7 800.3M830.4 802.6V809.3" stroke="#7f8fa8" stroke-opacity=".85" stroke-width=".8" fill="none"/><polygon points="830.4,798.1 835.7,800.3 835.7,807.1 830.4,809.3 825.1,807.1 825.1,800.3" fill="none" stroke="#6f7f98" stroke-opacity=".7" stroke-width=".6"/><polygon points="819.3,798.9 824.6,801.1 824.6,807.9 819.3,810.1 814.0,807.9 814.0,801.1" fill="#1e1e1e" opacity=".35" transform="translate(.7,.8)"/><linearGradient id="cg251" x1="0" y1="0" x2="0" y2="1"><stop offset="0" stop-color="#c4202e"/><stop offset="1" stop-color="#8f0a26"/></linearGradient><polygon points="814.0,801.1 819.3,803.4 824.6,801.1 824.6,807.9 819.3,810.1 814.0,807.9" fill="url(#cg251)"/><polygon points="819.3,798.9 824.6,801.1 819.3,803.4 814.0,801.1" fill="#f0562a"/><path d="M814.0 801.1L819.3 803.4L824.6 801.1M819.3 803.4V810.1" stroke="#7f8fa8" stroke-opacity=".85" stroke-width=".8" fill="none"/><polygon points="819.3,798.9 824.6,801.1 824.6,807.9 819.3,810.1 814.0,807.9 814.0,801.1" fill="none" stroke="#6f7f98" stroke-opacity=".7" stroke-width=".6"/><g transform="translate(937,775.5) scale(0.69,0.635)"><rect x="1.700" y="1.700" width="39" height="44" fill="#23272f" opacity=".55"/><rect x=".5" y=".5" width="39" height="44" fill="url(#gSheetB)" stroke="#5f7298" stroke-width="1.1"/><rect x="4" y="4" width="8" height="1.300" fill="#6f88ba" opacity=".8"/><rect x="4" y="9" width="8" height="1.300" fill="#6f88ba" opacity=".8"/><rect x="4" y="15" width="8" height="1.300" fill="#6f88ba" opacity=".8"/><rect x="4" y="21.5" width="8" height="1.300" fill="#6f88ba" opacity=".8"/><rect x="4" y="27.5" width="8" height="1.300" fill="#6f88ba" opacity=".8"/><rect x="4" y="33" width="8" height="1.300" fill="#6f88ba" opacity=".8"/><rect x="4" y="39" width="8" height="1.300" fill="#6f88ba" opacity=".8"/><rect x="12.300" y="8.800" width="37" height="43" fill="#23272f" opacity=".62"/><rect x="10.500" y="6.500" width="37" height="43" fill="url(#gSheet)" stroke="#667aa3" stroke-width="1.1"/><rect x="12" y="8" width="34" height="12" fill="#fff" opacity=".85"/><rect x="14" y="10" width="31" height="1" fill="#8da2c8" opacity=".75"/><rect x="14" y="16" width="31" height="1" fill="#8da2c8" opacity=".75"/><rect x="14" y="22.5" width="31" height="1" fill="#8da2c8" opacity=".75"/><rect x="14" y="28.5" width="31" height="1" fill="#8da2c8" opacity=".75"/><rect x="14" y="34.5" width="31" height="1" fill="#8da2c8" opacity=".75"/><rect x="14" y="40" width="31" height="1" fill="#8da2c8" opacity=".75"/><rect x="14" y="45.5" width="31" height="1" fill="#8da2c8" opacity=".75"/><polyline points="11.700,24.300 18.200,16.800 23,21.600 29.100,14.800 33.900,16.100 38,10.300 42.700,10.300" fill="none" stroke="#ffcf1c" stroke-width="2.400" stroke-linejoin="round" stroke-linecap="round"/><polyline points="12,34.200 16.800,33.900 20.200,28.400 25.700,29.800 30.400,24 35.200,28.400 42,20.900" fill="none" stroke="#f0561e" stroke-width="2.400" stroke-linejoin="round" stroke-linecap="round"/><polyline points="11.700,42 18.900,38 25.700,43.700 31.800,38 37.300,31.100 43.400,40.700" fill="none" stroke="#2a8fe6" stroke-width="2.400" stroke-linejoin="round" stroke-linecap="round"/></g><g transform="translate(1073,776) scale(1.52)"><path d="M0 3L8.500 8.500 9.300 24 5 20.500 .5 24.500z" fill="#33b41c"/><path d="M0 9l7.500 5 .8 9.500L5 20.500 .5 24.500z" fill="#2aa016" opacity=".8"/><path d="M0 1.500L1.500 0l3 .3L21.300 14.300l-4.800 1 .8 6.700-6.800-4.500L0 7z" fill="#7fe85e"/><path d="M3 4.500l12.500 11.200" stroke="#55c93a" stroke-width="1.100" fill="none"/><path d="M10.500 17.500l6.800 4.500-.8-6.700z" fill="#4cc232"/><ellipse cx="3.200" cy="4.400" rx="1.100" ry=".8" fill="#1f8a12"/></g></svg>
<span style="left:328.3px;top:87.1px;font-size:10.5px;line-height:10.5px;font-weight:700;color:#fff;font-family:'Liberation Sans',sans-serif;">?</span>
</body></html>
